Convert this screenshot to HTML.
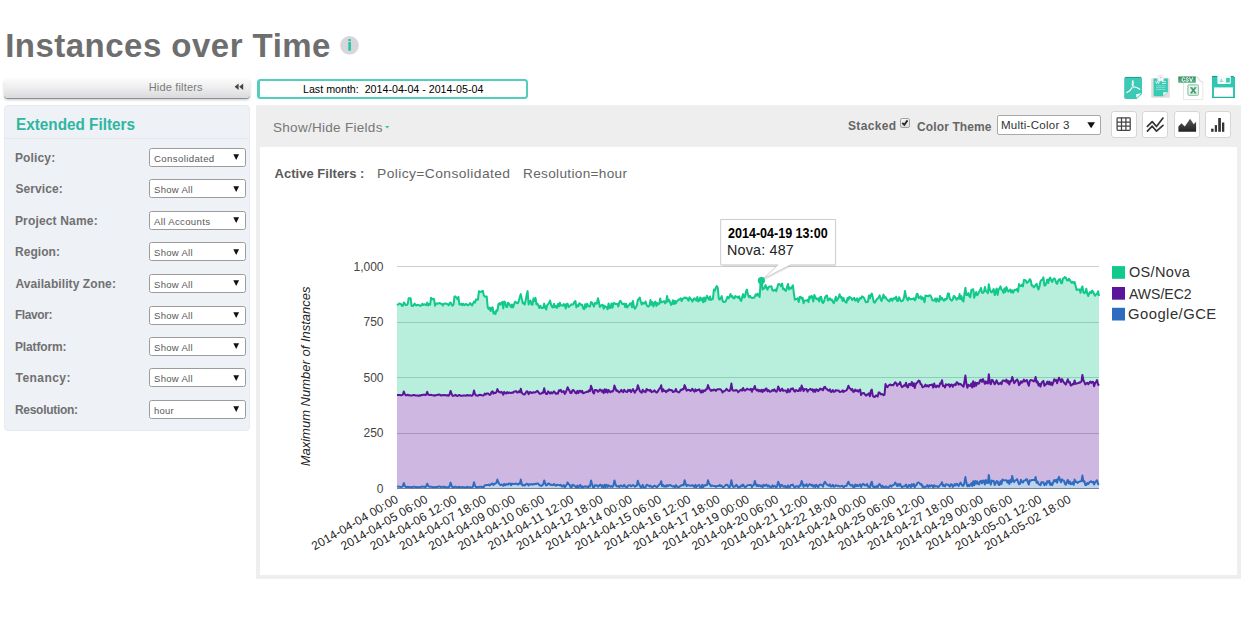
<!DOCTYPE html>
<html><head><meta charset="utf-8"><title>Instances over Time</title>
<style>
html,body{margin:0;padding:0;background:#fff;}
body{width:1254px;height:630px;position:relative;overflow:hidden;font-family:"Liberation Sans",sans-serif;}
.t{position:absolute;white-space:nowrap;font-family:"Liberation Sans",sans-serif;}
.b{position:absolute;}
svg text{font-family:"Liberation Sans",sans-serif;}
</style></head><body>
<div class="t" style="left:5.21px;top:25px;font-size:33px;line-height:41px;color:#6e6e6e;letter-spacing:0.476px;font-weight:bold;">Instances over Time</div>
<svg class="b" style="left:338px;top:34px" width="24" height="24" viewBox="338 34 24 24"><circle cx="349.5" cy="45.3" r="9.3" fill="#d6d7db"/><rect x="348.2" y="39" width="2.8" height="2.3" rx="1" fill="#2cc4a4"/><rect x="348.3" y="42.1" width="2.7" height="8.6" rx="0.6" fill="#2cc4a4"/></svg>
<div class="b" style="left:4px;top:78px;width:246px;height:20px;border-radius:4px;background:linear-gradient(#fcfcfc,#ededee 50%,#d9dadd);box-shadow:0 1px 0.5px #8c9099, 0 2px 2.5px rgba(0,0,0,.22);"></div>
<div class="t" style="left:148.72px;top:80px;font-size:11px;line-height:14px;color:#7a7a7a;letter-spacing:0.174px;">Hide filters</div>
<svg class="b" style="left:234px;top:83px" width="10" height="8" viewBox="0 0 10 8"><path d="M4.6 0.6 L0.6 3.8 L4.6 7 Z M9.2 0.6 L5.2 3.8 L9.2 7 Z" fill="#444"/></svg>
<div class="b" style="left:4px;top:105px;width:246px;height:326px;box-sizing:border-box;border-radius:4px;background:#eef1f6;border:1px solid #e7eaf0;"></div>
<div class="t" style="left:15.78px;top:115px;font-size:16px;line-height:20px;color:#2db7a1;letter-spacing:0.000px;transform:scaleX(0.9556);transform-origin:0 0;font-weight:bold;">Extended Filters</div>
<div class="b" style="left:5px;top:138px;width:244px;height:1px;background:#e4e7ee;"></div>
<div class="t" style="left:14.95px;top:151px;font-size:12px;line-height:15px;color:#707070;letter-spacing:0.150px;font-weight:bold;">Policy:</div>
<div class="b" style="left:149px;top:148px;width:97px;height:19px;box-sizing:border-box;background:#fff;border:1px solid #9c9c9c;border-radius:2.5px;"></div>
<div class="t" style="left:153.63px;top:154px;font-size:9px;line-height:11px;color:#585858;letter-spacing:0.323px;transform:scaleX(1.0741);transform-origin:0 0;">Consolidated</div>
<svg class="b" style="left:233px;top:154.0px" width="7" height="7" viewBox="0 0 7 7"><path d="M0.3 0.3 H6.1 L3.2 5.9 Z" fill="#111"/></svg>
<div class="t" style="left:15.39px;top:182px;font-size:12px;line-height:15px;color:#707070;letter-spacing:0.107px;font-weight:bold;">Service:</div>
<div class="b" style="left:149px;top:179px;width:97px;height:19px;box-sizing:border-box;background:#fff;border:1px solid #9c9c9c;border-radius:2.5px;"></div>
<div class="t" style="left:153.70px;top:185px;font-size:9px;line-height:11px;color:#585858;letter-spacing:0.272px;transform:scaleX(1.0601);transform-origin:0 0;">Show All</div>
<svg class="b" style="left:233px;top:185.5px" width="7" height="7" viewBox="0 0 7 7"><path d="M0.3 0.3 H6.1 L3.2 5.9 Z" fill="#111"/></svg>
<div class="t" style="left:14.95px;top:214px;font-size:12px;line-height:15px;color:#707070;letter-spacing:0.166px;font-weight:bold;">Project Name:</div>
<div class="b" style="left:149px;top:211px;width:97px;height:19px;box-sizing:border-box;background:#fff;border:1px solid #9c9c9c;border-radius:2.5px;"></div>
<div class="t" style="left:154.10px;top:217px;font-size:9px;line-height:11px;color:#585858;letter-spacing:0.297px;transform:scaleX(1.0720);transform-origin:0 0;">All Accounts</div>
<svg class="b" style="left:233px;top:217.0px" width="7" height="7" viewBox="0 0 7 7"><path d="M0.3 0.3 H6.1 L3.2 5.9 Z" fill="#111"/></svg>
<div class="t" style="left:14.95px;top:245px;font-size:12px;line-height:15px;color:#707070;letter-spacing:0.065px;font-weight:bold;">Region:</div>
<div class="b" style="left:149px;top:242px;width:97px;height:19px;box-sizing:border-box;background:#fff;border:1px solid #9c9c9c;border-radius:2.5px;"></div>
<div class="t" style="left:153.70px;top:248px;font-size:9px;line-height:11px;color:#585858;letter-spacing:0.272px;transform:scaleX(1.0601);transform-origin:0 0;">Show All</div>
<svg class="b" style="left:233px;top:248.5px" width="7" height="7" viewBox="0 0 7 7"><path d="M0.3 0.3 H6.1 L3.2 5.9 Z" fill="#111"/></svg>
<div class="t" style="left:15.45px;top:277px;font-size:12px;line-height:15px;color:#707070;letter-spacing:0.090px;font-weight:bold;">Availability Zone:</div>
<div class="b" style="left:149px;top:274px;width:97px;height:19px;box-sizing:border-box;background:#fff;border:1px solid #9c9c9c;border-radius:2.5px;"></div>
<div class="t" style="left:153.70px;top:280px;font-size:9px;line-height:11px;color:#585858;letter-spacing:0.272px;transform:scaleX(1.0601);transform-origin:0 0;">Show All</div>
<svg class="b" style="left:233px;top:280.0px" width="7" height="7" viewBox="0 0 7 7"><path d="M0.3 0.3 H6.1 L3.2 5.9 Z" fill="#111"/></svg>
<div class="t" style="left:14.95px;top:308px;font-size:12px;line-height:15px;color:#707070;letter-spacing:-0.404px;font-weight:bold;">Flavor:</div>
<div class="b" style="left:149px;top:306px;width:97px;height:19px;box-sizing:border-box;background:#fff;border:1px solid #9c9c9c;border-radius:2.5px;"></div>
<div class="t" style="left:153.70px;top:311px;font-size:9px;line-height:11px;color:#585858;letter-spacing:0.272px;transform:scaleX(1.0601);transform-origin:0 0;">Show All</div>
<svg class="b" style="left:233px;top:311.5px" width="7" height="7" viewBox="0 0 7 7"><path d="M0.3 0.3 H6.1 L3.2 5.9 Z" fill="#111"/></svg>
<div class="t" style="left:14.95px;top:340px;font-size:12px;line-height:15px;color:#707070;letter-spacing:-0.127px;font-weight:bold;">Platform:</div>
<div class="b" style="left:149px;top:337px;width:97px;height:19px;box-sizing:border-box;background:#fff;border:1px solid #9c9c9c;border-radius:2.5px;"></div>
<div class="t" style="left:153.70px;top:343px;font-size:9px;line-height:11px;color:#585858;letter-spacing:0.272px;transform:scaleX(1.0601);transform-origin:0 0;">Show All</div>
<svg class="b" style="left:233px;top:343.0px" width="7" height="7" viewBox="0 0 7 7"><path d="M0.3 0.3 H6.1 L3.2 5.9 Z" fill="#111"/></svg>
<div class="t" style="left:15.57px;top:371px;font-size:12px;line-height:15px;color:#707070;letter-spacing:0.434px;font-weight:bold;">Tenancy:</div>
<div class="b" style="left:149px;top:368px;width:97px;height:19px;box-sizing:border-box;background:#fff;border:1px solid #9c9c9c;border-radius:2.5px;"></div>
<div class="t" style="left:153.70px;top:374px;font-size:9px;line-height:11px;color:#585858;letter-spacing:0.272px;transform:scaleX(1.0601);transform-origin:0 0;">Show All</div>
<svg class="b" style="left:233px;top:374.5px" width="7" height="7" viewBox="0 0 7 7"><path d="M0.3 0.3 H6.1 L3.2 5.9 Z" fill="#111"/></svg>
<div class="t" style="left:14.95px;top:403px;font-size:12px;line-height:15px;color:#707070;letter-spacing:-0.283px;font-weight:bold;">Resolution:</div>
<div class="b" style="left:149px;top:400px;width:97px;height:19px;box-sizing:border-box;background:#fff;border:1px solid #9c9c9c;border-radius:2.5px;"></div>
<div class="t" style="left:153.51px;top:406px;font-size:9px;line-height:11px;color:#585858;letter-spacing:0.253px;transform:scaleX(1.0458);transform-origin:0 0;">hour</div>
<svg class="b" style="left:233px;top:406.0px" width="7" height="7" viewBox="0 0 7 7"><path d="M0.3 0.3 H6.1 L3.2 5.9 Z" fill="#111"/></svg>
<div class="b" style="left:257px;top:79px;width:271px;height:20px;box-sizing:border-box;border:2px solid #52cebb;border-left-width:3px;border-radius:3.5px;background:#fff;"></div>
<div class="t" style="left:302.55px;top:82px;font-size:11px;line-height:14px;color:#000;letter-spacing:0.000px;transform:scaleX(0.9700);transform-origin:0 0;">Last month:&nbsp; 2014-04-04 - 2014-05-04</div>
<svg class="b" style="left:1120px;top:72px" width="120" height="30" viewBox="1120 72 120 30">
<defs>
<linearGradient id="gC" x1="0" y1="0" x2="0" y2="1"><stop offset="0" stop-color="#338f62"/><stop offset="1" stop-color="#63b48d"/></linearGradient>
</defs>
<!-- pdf -->
<path d="M1126 77 H1140.4 Q1142 77 1142 78.6 V93.9 L1136.7 98.9 H1126 Q1124.2 98.9 1124.2 97.2 V78.6 Q1124.2 77 1126 77 Z" fill="#3ccab6"/>
<path d="M1125.2 77.4 H1141 " stroke="#1f9484" stroke-width="0.9" fill="none"/>
<path d="M1136 94.3 L1141.3 93.2 L1136.7 97.9 Z" fill="#f2fbf9"/>
<g fill="none" stroke="#ffffff" stroke-width="1.25" stroke-linecap="round">
<path d="M1132.8 80.9 Q1133.6 84.2 1132.5 87 Q1130.6 90.8 1126.9 92.5"/>
<path d="M1132.5 87 Q1136.5 86.6 1139.7 89.3"/>
<path d="M1132.5 87 Q1131.2 84 1132.8 80.9" stroke-width="0.7"/>
</g>
<circle cx="1132.5" cy="87" r="0.7" fill="#6ad4c4"/>
<!-- clipboard -->
<rect x="1151.2" y="78.3" width="18.6" height="19.4" rx="1.2" fill="#e3dddd"/>
<path d="M1153.6 78.5 H1167.9 V92.2 L1163.2 96.3 H1153.6 Z" fill="#36cbb5"/>
<path d="M1163.1 92.3 L1167.7 92 L1163.3 96.1 Z" fill="#f3eeee"/>
<path d="M1157.5 81 V78.3 Q1157.5 75.1 1160.6 75.1 Q1163.7 75.1 1163.7 78.3 V81 Z" fill="#f7f5f5" stroke="#dcd6d6" stroke-width="0.5"/>
<circle cx="1160.6" cy="77.6" r="0.8" fill="#c9c4c4"/>
<path d="M1155.6 80.9 L1156.6 83.6 L1157.6 81.4 L1158.6 83.6 L1159.6 80.9" fill="none" stroke="#fff" stroke-width="0.8" opacity="0.9"/>
<path d="M1162 81.6 H1166 M1162 83.5 H1166" stroke="#fff" stroke-width="0.8" opacity="0.85"/>
<path d="M1156 85.8 H1165.6 M1156 87.7 H1165.6 M1156 89.6 H1165.6" stroke="#fff" stroke-width="0.7" opacity="0.55"/>
<!-- csv -->
<path d="M1183.5 76.8 H1197 L1202.8 82.4 V99.6 H1183.5 Z" fill="#fff" stroke="#dcdcdc" stroke-width="0.7"/>
<path d="M1197 76.8 Q1198 81.5 1202.8 82.4" fill="none" stroke="#d0d0d0" stroke-width="0.7"/>
<rect x="1178.2" y="76.5" width="17.6" height="6.3" fill="url(#gC)"/>
<g fill="none" stroke="#fff" stroke-width="0.95" stroke-linecap="round" stroke-linejoin="round">
<path d="M1184.7 78.3 Q1183.9 77.5 1183.2 77.6 Q1182.1 77.8 1182.1 79.5 Q1182.1 81.3 1183.2 81.4 Q1184 81.5 1184.7 80.7"/>
<path d="M1188.3 78.3 Q1187.6 77.5 1186.8 77.7 Q1186 78 1186.2 78.8 Q1186.5 79.4 1187.3 79.6 Q1188.4 79.9 1188.3 80.7 Q1188.1 81.5 1187.1 81.4 Q1186.3 81.3 1185.9 80.7"/>
<path d="M1189.6 77.7 L1191.1 81.4 L1192.6 77.7"/>
</g>
<rect x="1187.9" y="84.9" width="10.4" height="10.4" rx="0.8" fill="#e9f5ee" stroke="#7cbd9a" stroke-width="1"/>
<path d="M1189.8 87.2 H1196.8 L1194.4 90.3 L1196.8 93.4 H1189.8 L1192.2 90.3 Z" fill="#3d9a69"/><path d="M1192 87.2 L1193.3 89 L1194.6 87.2 Z M1192 93.4 L1193.3 91.6 L1194.6 93.4 Z" fill="#e9f5ee"/>
<!-- floppy -->
<path d="M1212 76 H1233 L1235 78 V97.9 H1212 Z" fill="#2fc7b0"/>
<path d="M1212 76.4 H1217.4 M1230.8 76.4 H1233.2 L1234.8 78" stroke="#1c8f80" stroke-width="0.9" fill="none"/>
<rect x="1214" y="87.4" width="19" height="9.3" fill="#fff"/>
<path d="M1217.4 76 H1230.8 V82.8 Q1230.8 84 1229.6 84 H1218.6 Q1217.4 84 1217.4 82.8 Z" fill="#f4fbfa"/>
<rect x="1226.1" y="78" width="3.7" height="4.5" fill="#38c9b3"/>
<path d="M1221.4 78.7 V81.2 M1219.7 81.4 H1223.1" stroke="#59c9b8" stroke-width="0.7" fill="none"/>
<path d="M1212.4 97.5 H1234.6" stroke="#26a895" stroke-width="0.8"/>
</svg>

<div class="b" style="left:256px;top:105px;width:985px;height:474px;background:#eeeeee;"></div>
<div class="b" style="left:260px;top:147px;width:977px;height:428px;background:#fff;"></div>
<div class="t" style="left:273.31px;top:120px;font-size:13px;line-height:16px;color:#777;letter-spacing:0.263px;transform:scaleX(1.0410);transform-origin:0 0;">Show/Hide Fields</div>
<svg class="b" style="left:384.8px;top:125.6px" width="5" height="3" viewBox="0 0 5 3"><path d="M0 0 H4.4 L2.2 2.4 Z" fill="#3fc3af"/></svg>
<div class="t" style="left:847.99px;top:119px;font-size:12px;line-height:15px;color:#666;letter-spacing:0.327px;font-weight:bold;">Stacked</div>
<div class="t" style="left:917.06px;top:120px;font-size:12px;line-height:15px;color:#666;letter-spacing:0.114px;font-weight:bold;">Color Theme</div>
<div class="b" style="left:900px;top:118px;width:10px;height:10px;box-sizing:border-box;border:1px solid #a3a3a3;border-radius:2px;background:linear-gradient(#f6f6f6,#dedede);"></div>
<svg class="b" style="left:900px;top:118px" width="10" height="10" viewBox="900 118 10 10"><path d="M902.3 122.8 L904.3 124.8 L907.5 120.4" stroke="#2b2b2b" stroke-width="1.9" fill="none"/></svg>
<div class="b" style="left:997px;top:115px;width:104px;height:19.5px;box-sizing:border-box;background:#fff;border:1px solid #a9a9a9;border-radius:2px;"></div>
<div class="t" style="left:1000.98px;top:118px;font-size:11px;line-height:14px;color:#333;letter-spacing:0.236px;transform:scaleX(1.0486);transform-origin:0 0;">Multi-Color 3</div>
<svg class="b" style="left:1086.5px;top:121.5px" width="9" height="7" viewBox="0 0 9 7"><path d="M0.3 0.3 H8.0 L4.15 6.2 Z" fill="#111"/></svg>
<div class="b" style="left:1111px;top:111px;width:26px;height:26.5px;box-sizing:border-box;background:#fff;border:1px solid #d6d6d6;border-radius:3px;"></div>
<div class="b" style="left:1142px;top:111px;width:26px;height:26.5px;box-sizing:border-box;background:#fff;border:1px solid #d6d6d6;border-radius:3px;"></div>
<div class="b" style="left:1174px;top:111px;width:26px;height:26.5px;box-sizing:border-box;background:#fff;border:1px solid #d6d6d6;border-radius:3px;"></div>
<div class="b" style="left:1205px;top:111px;width:26px;height:26.5px;box-sizing:border-box;background:#fff;border:1px solid #d6d6d6;border-radius:3px;"></div>
<svg class="b" style="left:1108px;top:108px" width="130" height="32" viewBox="1108 108 130 32">
<defs><linearGradient id="gA" x1="0" y1="0" x2="0" y2="1"><stop offset="0" stop-color="#5a5a5a"/><stop offset="1" stop-color="#222"/></linearGradient></defs>
<g fill="none" stroke="#454545" stroke-width="1.25">
<rect x="1117.1" y="117.8" width="13.1" height="12.6" rx="0.8"/>
<path d="M1121.5 117.8 V130.4 M1125.9 117.8 V130.4 M1117.1 122 H1130.2 M1117.1 126.2 H1130.2"/>
</g>
<g fill="none" stroke="#333" stroke-width="1.7" stroke-linecap="round" stroke-linejoin="round">
<path d="M1147.4 126.3 L1152.2 121.6 L1156.5 126.5 L1163 118.1"/>
<path d="M1147.4 131.1 L1152.2 126.2 L1156.5 131.1 L1163 125.4"/>
</g>
<path d="M1178.4 131.8 V126.4 L1181.4 123.3 L1184.8 126.6 L1190.1 118.7 L1193.7 124.3 L1196.1 121.7 V131.8 Z" fill="url(#gA)"/>
<g fill="#353535">
<rect x="1211.1" y="128.7" width="2.5" height="3.1"/>
<rect x="1214.8" y="125.1" width="2.2" height="6.7"/>
<rect x="1218.2" y="118" width="2.7" height="13.8"/>
<rect x="1222" y="122.5" width="2.3" height="9.3"/>
</g>
</svg>

<div class="t" style="left:274.59px;top:166px;font-size:13px;line-height:16px;color:#5a5a5a;letter-spacing:0.016px;font-weight:bold;">Active Filters :</div>
<div class="t" style="left:376.77px;top:166px;font-size:13px;line-height:16px;color:#666;letter-spacing:0.386px;transform:scaleX(1.0636);transform-origin:0 0;">Policy=Consolidated</div>
<div class="t" style="left:523.19px;top:166px;font-size:13px;line-height:16px;color:#666;letter-spacing:0.305px;transform:scaleX(1.0477);transform-origin:0 0;">Resolution=hour</div>
<svg class="b" style="left:0;top:0" width="1254" height="630" viewBox="0 0 1254 630">
<rect x="397" y="488" width="702" height="1" fill="#8a8a8a"/>
<rect x="397" y="433" width="702" height="1" fill="#cccccc"/>
<rect x="397" y="377" width="702" height="1" fill="#cccccc"/>
<rect x="397" y="322" width="702" height="1" fill="#cccccc"/>
<rect x="397" y="266" width="702" height="1" fill="#cccccc"/>
<path d="M397.0 305.2 L398.0 304.5 L398.9 303.6 L399.9 303.7 L400.9 304.0 L401.9 305.9 L402.9 305.8 L403.8 302.4 L404.8 303.7 L405.8 305.1 L406.8 305.1 L407.7 303.9 L408.7 298.2 L409.7 298.2 L410.6 298.2 L411.6 305.7 L412.6 306.1 L413.6 305.3 L414.6 303.6 L415.5 305.0 L416.5 305.4 L417.5 304.8 L418.4 305.1 L419.4 305.3 L420.4 305.9 L421.4 305.2 L422.4 303.8 L423.3 305.0 L424.3 304.3 L425.3 304.6 L426.2 305.2 L427.2 302.6 L428.2 305.5 L429.2 304.0 L430.1 304.8 L431.1 297.8 L432.1 299.3 L433.1 298.8 L434.1 299.2 L435.0 305.7 L436.0 303.7 L437.0 303.4 L437.9 303.8 L438.9 303.2 L439.9 303.0 L440.9 303.8 L441.9 304.0 L442.8 305.6 L443.8 303.7 L444.8 303.7 L445.8 303.4 L446.7 303.8 L447.7 304.4 L448.7 305.4 L449.6 303.3 L450.6 302.5 L451.6 304.6 L452.6 305.8 L453.6 304.3 L454.5 296.4 L455.5 296.6 L456.5 297.6 L457.4 299.1 L458.4 297.0 L459.4 304.4 L460.4 304.6 L461.4 303.6 L462.3 305.2 L463.3 303.9 L464.3 305.1 L465.2 304.4 L466.2 303.9 L467.2 305.0 L468.2 305.3 L469.1 304.4 L470.1 303.1 L471.1 304.6 L472.1 305.5 L473.1 303.4 L474.0 301.6 L475.0 302.7 L476.0 299.4 L476.9 299.5 L477.9 299.8 L478.9 291.2 L479.9 291.8 L480.9 291.9 L481.8 291.5 L482.8 290.7 L483.8 295.3 L484.8 296.5 L485.7 296.7 L486.7 296.4 L487.7 307.1 L488.6 309.0 L489.6 307.5 L490.6 311.1 L491.6 307.9 L492.6 307.2 L493.5 313.6 L494.5 312.1 L495.5 314.1 L496.4 310.2 L497.4 310.8 L498.4 304.1 L499.4 303.1 L500.4 304.7 L501.3 303.0 L502.3 301.9 L503.3 308.4 L504.2 301.5 L505.2 302.2 L506.2 306.8 L507.2 307.1 L508.1 302.7 L509.1 303.7 L510.1 305.4 L511.1 307.3 L512.0 304.5 L513.0 307.4 L514.0 304.6 L515.0 301.8 L516.0 302.2 L516.9 303.1 L517.9 303.3 L518.9 300.5 L519.9 296.7 L520.8 294.1 L521.8 299.0 L522.8 303.4 L523.8 302.8 L524.7 304.6 L525.7 300.1 L526.7 294.7 L527.6 291.1 L528.6 304.5 L529.6 301.3 L530.6 300.6 L531.5 304.6 L532.5 304.8 L533.5 298.3 L534.5 301.0 L535.5 297.9 L536.4 304.3 L537.4 303.5 L538.4 305.6 L539.4 308.0 L540.3 305.7 L541.3 307.8 L542.3 308.1 L543.2 307.8 L544.2 303.6 L545.2 307.8 L546.2 309.5 L547.1 305.3 L548.1 304.1 L549.1 302.8 L550.1 300.6 L551.0 304.5 L552.0 306.8 L553.0 307.4 L554.0 303.8 L555.0 307.2 L555.9 306.0 L556.9 307.9 L557.9 303.9 L558.9 306.5 L559.8 302.7 L560.8 305.5 L561.8 305.4 L562.8 305.8 L563.7 304.1 L564.7 304.7 L565.7 308.6 L566.6 303.9 L567.6 303.7 L568.6 307.1 L569.6 305.9 L570.5 305.5 L571.5 304.2 L572.5 304.6 L573.5 304.2 L574.5 301.5 L575.4 301.0 L576.4 307.3 L577.4 305.2 L578.4 306.1 L579.3 303.2 L580.3 304.1 L581.3 305.0 L582.2 304.7 L583.2 308.5 L584.2 309.2 L585.2 304.3 L586.1 307.4 L587.1 303.7 L588.1 305.7 L589.1 306.5 L590.0 306.6 L591.0 302.0 L592.0 302.6 L593.0 304.7 L594.0 306.6 L594.9 302.8 L595.9 303.3 L596.9 303.7 L597.9 298.3 L598.8 301.4 L599.8 307.0 L600.8 305.9 L601.8 304.9 L602.7 304.7 L603.7 308.7 L604.7 305.8 L605.6 306.8 L606.6 307.0 L607.6 309.3 L608.6 303.5 L609.5 307.9 L610.5 307.9 L611.5 303.5 L612.5 307.8 L613.5 303.3 L614.4 303.1 L615.4 304.0 L616.4 304.0 L617.4 304.0 L618.3 306.5 L619.3 302.4 L620.3 300.8 L621.2 302.1 L622.2 303.9 L623.2 304.0 L624.2 303.6 L625.1 307.0 L626.1 303.8 L627.1 307.6 L628.1 306.2 L629.0 305.1 L630.0 303.6 L631.0 303.1 L632.0 307.2 L633.0 300.9 L633.9 306.9 L634.9 308.7 L635.9 307.3 L636.9 305.1 L637.8 300.0 L638.8 299.1 L639.8 297.6 L640.8 301.7 L641.7 304.5 L642.7 302.5 L643.7 303.4 L644.6 303.4 L645.6 301.5 L646.6 305.0 L647.6 306.3 L648.5 306.5 L649.5 305.3 L650.5 299.9 L651.5 304.8 L652.5 302.2 L653.4 306.6 L654.4 302.9 L655.4 301.6 L656.4 306.0 L657.3 303.0 L658.3 304.5 L659.3 303.8 L660.2 298.4 L661.2 302.4 L662.2 302.0 L663.2 301.6 L664.1 301.0 L665.1 303.4 L666.1 302.2 L667.1 296.0 L668.0 301.5 L669.0 299.8 L670.0 302.0 L671.0 304.9 L672.0 304.0 L672.9 300.2 L673.9 304.1 L674.9 300.9 L675.9 303.4 L676.8 301.3 L677.8 300.4 L678.8 299.5 L679.8 299.4 L680.7 298.3 L681.7 301.2 L682.7 298.7 L683.6 298.5 L684.6 297.5 L685.6 298.0 L686.6 297.7 L687.5 299.1 L688.5 300.6 L689.5 297.2 L690.5 299.0 L691.5 299.4 L692.4 301.6 L693.4 299.5 L694.4 298.2 L695.4 299.6 L696.3 300.7 L697.3 296.9 L698.3 301.5 L699.2 300.8 L700.2 297.4 L701.2 300.1 L702.2 298.3 L703.1 302.2 L704.1 297.5 L705.1 301.4 L706.1 298.0 L707.0 295.8 L708.0 298.3 L709.0 299.8 L710.0 296.4 L711.0 300.0 L711.9 299.4 L712.9 298.9 L713.9 289.5 L714.9 290.7 L715.8 287.7 L716.8 286.1 L717.8 287.9 L718.8 298.5 L719.7 299.6 L720.7 298.1 L721.7 296.1 L722.6 300.8 L723.6 302.1 L724.6 301.9 L725.6 301.3 L726.5 299.4 L727.5 296.7 L728.5 298.3 L729.5 297.0 L730.5 294.0 L731.4 296.6 L732.4 296.1 L733.4 298.3 L734.4 298.3 L735.3 296.0 L736.3 296.8 L737.3 296.8 L738.2 297.9 L739.2 296.3 L740.2 299.8 L741.2 300.9 L742.1 297.4 L743.1 294.1 L744.1 297.6 L745.1 296.3 L746.0 291.3 L747.0 289.6 L748.0 294.9 L749.0 297.1 L750.0 295.8 L750.9 297.4 L751.9 297.9 L752.9 297.7 L753.9 297.8 L754.8 296.6 L755.8 294.2 L756.8 295.6 L757.8 293.6 L758.7 295.3 L759.7 297.0 L760.7 279.9 L761.6 277.8 L762.6 289.5 L763.6 288.9 L764.6 287.7 L765.5 285.0 L766.5 287.9 L767.5 289.7 L768.5 287.2 L769.5 286.6 L770.4 286.5 L771.4 286.2 L772.4 290.2 L773.4 290.8 L774.3 290.2 L775.3 289.6 L776.3 291.1 L777.2 287.9 L778.2 284.2 L779.2 284.0 L780.2 284.8 L781.1 286.2 L782.1 283.6 L783.1 289.2 L784.1 288.7 L785.0 290.2 L786.0 291.0 L787.0 287.0 L788.0 284.0 L789.0 289.4 L789.9 287.6 L790.9 288.7 L791.9 287.0 L792.9 285.4 L793.8 292.9 L794.8 299.7 L795.8 298.9 L796.8 299.0 L797.7 298.4 L798.7 302.1 L799.7 297.0 L800.6 296.7 L801.6 298.6 L802.6 297.7 L803.6 303.2 L804.5 300.8 L805.5 300.4 L806.5 300.5 L807.5 299.8 L808.5 302.1 L809.4 296.5 L810.4 298.3 L811.4 295.9 L812.4 296.7 L813.3 301.6 L814.3 295.0 L815.3 297.0 L816.2 298.8 L817.2 299.5 L818.2 298.2 L819.2 301.5 L820.1 297.1 L821.1 296.8 L822.1 301.8 L823.1 303.0 L824.0 301.5 L825.0 297.4 L826.0 296.0 L827.0 295.5 L828.0 300.5 L828.9 299.7 L829.9 298.3 L830.9 300.0 L831.9 299.6 L832.8 301.8 L833.8 303.1 L834.8 300.3 L835.8 296.7 L836.7 300.8 L837.7 299.3 L838.7 297.1 L839.6 294.2 L840.6 297.5 L841.6 297.0 L842.6 300.9 L843.5 298.0 L844.5 300.9 L845.5 302.0 L846.5 302.7 L847.5 298.0 L848.4 299.8 L849.4 296.8 L850.4 297.8 L851.4 298.1 L852.3 300.0 L853.3 298.6 L854.3 297.9 L855.2 300.6 L856.2 300.2 L857.2 298.3 L858.2 302.0 L859.1 299.7 L860.1 297.9 L861.1 298.7 L862.1 296.3 L863.0 296.8 L864.0 297.9 L865.0 300.2 L866.0 302.3 L867.0 302.1 L867.9 301.8 L868.9 295.4 L869.9 298.2 L870.9 294.9 L871.8 293.6 L872.8 297.4 L873.8 302.1 L874.8 302.7 L875.7 301.1 L876.7 299.4 L877.7 298.6 L878.6 297.6 L879.6 295.4 L880.6 298.8 L881.6 301.0 L882.5 298.2 L883.5 294.6 L884.5 297.9 L885.5 297.1 L886.5 298.9 L887.4 299.9 L888.4 300.6 L889.4 301.4 L890.4 299.0 L891.3 298.6 L892.3 300.8 L893.3 298.6 L894.2 298.0 L895.2 299.1 L896.2 296.6 L897.2 301.0 L898.1 301.0 L899.1 297.2 L900.1 299.6 L901.1 301.3 L902.0 301.0 L903.0 300.4 L904.0 297.6 L905.0 291.1 L906.0 296.4 L906.9 299.0 L907.9 300.4 L908.9 297.6 L909.9 299.0 L910.8 299.4 L911.8 298.9 L912.8 299.1 L913.8 298.1 L914.7 300.3 L915.7 299.0 L916.7 294.1 L917.6 294.0 L918.6 298.0 L919.6 297.8 L920.6 296.2 L921.5 299.2 L922.5 297.3 L923.5 298.9 L924.5 302.3 L925.5 295.4 L926.4 296.1 L927.4 296.1 L928.4 296.2 L929.4 295.4 L930.3 295.2 L931.3 297.1 L932.3 300.1 L933.2 300.6 L934.2 300.6 L935.2 298.5 L936.2 301.8 L937.1 298.4 L938.1 300.3 L939.1 301.5 L940.1 295.9 L941.0 299.4 L942.0 297.8 L943.0 299.7 L944.0 300.8 L945.0 298.9 L945.9 299.7 L946.9 298.5 L947.9 293.5 L948.9 293.6 L949.8 298.8 L950.8 299.8 L951.8 300.7 L952.8 299.4 L953.7 296.0 L954.7 296.5 L955.7 298.2 L956.6 299.8 L957.6 298.1 L958.6 298.6 L959.6 294.1 L960.5 299.1 L961.5 296.1 L962.5 300.5 L963.5 301.5 L964.5 293.0 L965.4 287.8 L966.4 295.0 L967.4 294.9 L968.4 293.1 L969.3 296.3 L970.3 297.3 L971.3 290.1 L972.2 289.6 L973.2 289.2 L974.2 297.8 L975.2 294.6 L976.1 292.0 L977.1 295.3 L978.1 294.1 L979.1 291.7 L980.0 290.4 L981.0 287.9 L982.0 292.8 L983.0 293.0 L984.0 291.6 L984.9 286.9 L985.9 291.0 L986.9 291.7 L987.9 293.2 L988.8 284.2 L989.8 289.2 L990.8 292.0 L991.8 292.4 L992.7 290.6 L993.7 289.1 L994.7 295.1 L995.6 292.0 L996.6 288.4 L997.6 294.9 L998.6 289.4 L999.5 288.6 L1000.5 286.3 L1001.5 289.8 L1002.5 290.3 L1003.5 293.0 L1004.4 288.4 L1005.4 291.9 L1006.4 287.0 L1007.4 289.7 L1008.3 291.6 L1009.3 290.7 L1010.3 289.5 L1011.2 292.5 L1012.2 290.4 L1013.2 292.7 L1014.2 290.3 L1015.1 289.7 L1016.1 290.2 L1017.1 288.9 L1018.1 291.6 L1019.0 284.1 L1020.0 286.0 L1021.0 286.1 L1022.0 284.5 L1023.0 286.4 L1023.9 280.0 L1024.9 280.1 L1025.9 280.7 L1026.8 282.9 L1027.8 282.1 L1028.8 281.2 L1029.8 279.1 L1030.8 280.6 L1031.7 285.6 L1032.7 285.4 L1033.7 287.3 L1034.7 286.4 L1035.6 284.9 L1036.6 283.8 L1037.6 287.6 L1038.5 289.5 L1039.5 286.6 L1040.5 281.3 L1041.5 279.9 L1042.5 279.7 L1043.4 277.4 L1044.4 285.5 L1045.4 285.2 L1046.3 283.3 L1047.3 279.4 L1048.3 283.0 L1049.3 278.8 L1050.2 277.6 L1051.2 280.3 L1052.2 281.9 L1053.2 279.5 L1054.2 278.4 L1055.1 279.3 L1056.1 282.7 L1057.1 284.0 L1058.0 281.1 L1059.0 279.5 L1060.0 279.1 L1061.0 282.9 L1062.0 283.3 L1062.9 278.6 L1063.9 278.2 L1064.9 277.0 L1065.8 277.5 L1066.8 280.2 L1067.8 280.7 L1068.8 278.7 L1069.8 279.8 L1070.7 281.5 L1071.7 282.8 L1072.7 281.8 L1073.7 283.2 L1074.6 282.0 L1075.6 286.1 L1076.6 290.0 L1077.5 289.6 L1078.5 289.4 L1079.5 289.5 L1080.5 292.8 L1081.5 288.2 L1082.4 286.5 L1083.4 292.3 L1084.4 293.3 L1085.3 292.1 L1086.3 288.8 L1087.3 293.8 L1088.3 296.0 L1089.2 293.3 L1090.2 291.8 L1091.2 293.1 L1092.2 290.6 L1093.2 291.9 L1094.1 294.1 L1095.1 295.7 L1096.1 294.2 L1097.0 294.2 L1098.0 291.2 L1099.0 296.1 L1099.0 385.7 L1098.0 384.3 L1097.0 380.1 L1096.1 382.0 L1095.1 383.2 L1094.1 386.2 L1093.2 381.9 L1092.2 381.8 L1091.2 382.9 L1090.2 381.5 L1089.2 382.9 L1088.3 384.3 L1087.3 382.7 L1086.3 383.6 L1085.3 384.5 L1084.4 382.1 L1083.4 380.2 L1082.4 374.9 L1081.5 381.4 L1080.5 382.4 L1079.5 382.3 L1078.5 383.1 L1077.5 383.2 L1076.6 383.4 L1075.6 383.9 L1074.6 380.4 L1073.7 384.3 L1072.7 383.8 L1071.7 385.3 L1070.7 385.6 L1069.8 382.0 L1068.8 382.5 L1067.8 379.3 L1066.8 381.9 L1065.8 384.6 L1064.9 383.5 L1063.9 382.6 L1062.9 380.7 L1062.0 379.1 L1061.0 382.0 L1060.0 379.7 L1059.0 377.8 L1058.0 380.3 L1057.1 383.2 L1056.1 379.9 L1055.1 380.8 L1054.2 379.2 L1053.2 382.7 L1052.2 385.1 L1051.2 382.5 L1050.2 384.7 L1049.3 381.6 L1048.3 384.1 L1047.3 381.6 L1046.3 383.9 L1045.4 384.7 L1044.4 385.7 L1043.4 380.9 L1042.5 381.7 L1041.5 383.1 L1040.5 386.6 L1039.5 383.9 L1038.5 385.5 L1037.6 381.4 L1036.6 382.5 L1035.6 376.9 L1034.7 380.6 L1033.7 381.4 L1032.7 380.5 L1031.7 380.2 L1030.8 380.0 L1029.8 380.8 L1028.8 385.7 L1027.8 383.2 L1026.8 380.0 L1025.9 380.8 L1024.9 381.5 L1023.9 379.6 L1023.0 381.5 L1022.0 382.7 L1021.0 381.2 L1020.0 383.9 L1019.0 385.2 L1018.1 381.3 L1017.1 379.5 L1016.1 380.4 L1015.1 381.9 L1014.2 383.2 L1013.2 380.0 L1012.2 376.9 L1011.2 381.4 L1010.3 381.0 L1009.3 384.6 L1008.3 381.1 L1007.4 382.7 L1006.4 379.6 L1005.4 381.4 L1004.4 380.9 L1003.5 380.5 L1002.5 380.7 L1001.5 384.2 L1000.5 382.6 L999.5 383.6 L998.6 384.2 L997.6 382.8 L996.6 380.4 L995.6 382.7 L994.7 384.3 L993.7 382.2 L992.7 380.2 L991.8 379.9 L990.8 384.2 L989.8 382.4 L988.8 374.3 L987.9 383.4 L986.9 383.3 L985.9 381.4 L984.9 383.9 L984.0 381.6 L983.0 379.1 L982.0 381.9 L981.0 379.7 L980.0 380.3 L979.1 383.4 L978.1 383.8 L977.1 382.7 L976.1 385.8 L975.2 382.4 L974.2 386.6 L973.2 381.2 L972.2 387.6 L971.3 383.5 L970.3 386.0 L969.3 385.6 L968.4 384.9 L967.4 387.7 L966.4 383.8 L965.4 375.6 L964.5 381.2 L963.5 386.8 L962.5 385.8 L961.5 385.0 L960.5 383.9 L959.6 383.8 L958.6 384.6 L957.6 382.7 L956.6 382.2 L955.7 385.1 L954.7 384.3 L953.7 384.8 L952.8 386.8 L951.8 384.6 L950.8 384.8 L949.8 386.8 L948.9 384.3 L947.9 384.7 L946.9 384.9 L945.9 384.3 L945.0 387.4 L944.0 385.7 L943.0 386.1 L942.0 380.2 L941.0 383.6 L940.1 383.3 L939.1 386.8 L938.1 386.3 L937.1 385.5 L936.2 387.3 L935.2 386.6 L934.2 383.5 L933.2 387.6 L932.3 384.5 L931.3 384.9 L930.3 384.9 L929.4 385.1 L928.4 386.7 L927.4 385.4 L926.4 386.3 L925.5 384.6 L924.5 386.4 L923.5 386.7 L922.5 387.3 L921.5 384.3 L920.6 384.3 L919.6 381.0 L918.6 380.6 L917.6 382.3 L916.7 382.8 L915.7 384.2 L914.7 388.1 L913.8 383.3 L912.8 386.1 L911.8 382.0 L910.8 385.3 L909.9 384.1 L908.9 384.1 L907.9 387.5 L906.9 386.8 L906.0 382.8 L905.0 385.7 L904.0 385.3 L903.0 386.5 L902.0 387.1 L901.1 385.5 L900.1 382.1 L899.1 384.1 L898.1 384.2 L897.2 385.8 L896.2 383.2 L895.2 382.3 L894.2 383.6 L893.3 385.3 L892.3 384.9 L891.3 385.2 L890.4 384.4 L889.4 385.0 L888.4 385.6 L887.4 387.1 L886.5 386.7 L885.5 384.0 L884.5 394.6 L883.5 395.3 L882.5 394.3 L881.6 394.1 L880.6 394.2 L879.6 392.4 L878.6 392.6 L877.7 396.5 L876.7 395.5 L875.7 395.4 L874.8 397.0 L873.8 396.9 L872.8 395.9 L871.8 389.6 L870.9 390.9 L869.9 396.3 L868.9 393.2 L867.9 394.7 L867.0 394.5 L866.0 395.7 L865.0 394.6 L864.0 392.9 L863.0 393.3 L862.1 393.3 L861.1 395.1 L860.1 389.5 L859.1 390.2 L858.2 391.7 L857.2 390.3 L856.2 390.9 L855.2 389.6 L854.3 391.5 L853.3 391.9 L852.3 389.0 L851.4 390.1 L850.4 388.8 L849.4 387.9 L848.4 385.7 L847.5 388.5 L846.5 390.4 L845.5 390.8 L844.5 390.9 L843.5 392.0 L842.6 390.3 L841.6 391.5 L840.6 391.8 L839.6 391.9 L838.7 390.4 L837.7 390.6 L836.7 390.6 L835.8 390.1 L834.8 391.6 L833.8 391.9 L832.8 390.0 L831.9 391.5 L830.9 392.0 L829.9 389.3 L828.9 390.7 L828.0 390.4 L827.0 389.1 L826.0 388.6 L825.0 386.7 L824.0 387.4 L823.1 390.3 L822.1 389.1 L821.1 389.5 L820.1 388.5 L819.2 390.0 L818.2 391.2 L817.2 389.9 L816.2 389.2 L815.3 391.9 L814.3 389.7 L813.3 391.7 L812.4 389.2 L811.4 390.0 L810.4 388.9 L809.4 389.5 L808.5 390.0 L807.5 391.6 L806.5 389.0 L805.5 389.4 L804.5 389.1 L803.6 391.1 L802.6 388.1 L801.6 385.6 L800.6 390.7 L799.7 388.4 L798.7 390.9 L797.7 391.1 L796.8 390.5 L795.8 390.0 L794.8 391.7 L793.8 390.5 L792.9 388.3 L791.9 388.9 L790.9 388.7 L789.9 391.8 L789.0 391.8 L788.0 389.1 L787.0 392.4 L786.0 390.9 L785.0 390.4 L784.1 390.4 L783.1 390.9 L782.1 388.6 L781.1 389.9 L780.2 391.0 L779.2 388.8 L778.2 386.5 L777.2 390.7 L776.3 391.8 L775.3 390.9 L774.3 389.4 L773.4 390.8 L772.4 390.0 L771.4 391.0 L770.4 391.8 L769.5 391.3 L768.5 390.0 L767.5 391.3 L766.5 388.5 L765.5 389.0 L764.6 390.8 L763.6 389.8 L762.6 392.0 L761.6 389.7 L760.7 391.4 L759.7 390.0 L758.7 391.4 L757.8 389.6 L756.8 390.5 L755.8 389.4 L754.8 385.9 L753.9 388.9 L752.9 389.0 L751.9 391.8 L750.9 388.8 L750.0 389.8 L749.0 389.4 L748.0 389.2 L747.0 388.8 L746.0 389.7 L745.1 390.7 L744.1 390.1 L743.1 388.0 L742.1 390.7 L741.2 389.6 L740.2 390.3 L739.2 391.2 L738.2 392.1 L737.3 390.7 L736.3 390.0 L735.3 390.5 L734.4 390.4 L733.4 390.7 L732.4 390.2 L731.4 383.6 L730.5 388.9 L729.5 391.0 L728.5 390.8 L727.5 389.9 L726.5 388.9 L725.6 390.1 L724.6 391.2 L723.6 391.2 L722.6 392.5 L721.7 390.6 L720.7 389.5 L719.7 389.3 L718.8 389.3 L717.8 389.3 L716.8 389.7 L715.8 391.0 L714.9 389.7 L713.9 389.5 L712.9 390.5 L711.9 389.9 L711.0 390.9 L710.0 389.6 L709.0 388.2 L708.0 385.1 L707.0 389.1 L706.1 389.3 L705.1 391.0 L704.1 390.3 L703.1 392.1 L702.2 390.3 L701.2 392.6 L700.2 391.3 L699.2 389.3 L698.3 389.9 L697.3 390.1 L696.3 391.0 L695.4 389.4 L694.4 391.7 L693.4 390.6 L692.4 388.7 L691.5 389.8 L690.5 391.0 L689.5 390.1 L688.5 389.7 L687.5 390.0 L686.6 390.7 L685.6 387.5 L684.6 385.1 L683.6 389.2 L682.7 388.9 L681.7 390.0 L680.7 389.8 L679.8 391.6 L678.8 392.5 L677.8 391.9 L676.8 391.4 L675.9 389.0 L674.9 391.4 L673.9 391.5 L672.9 392.0 L672.0 390.2 L671.0 390.1 L670.0 390.2 L669.0 389.4 L668.0 390.9 L667.1 390.6 L666.1 392.2 L665.1 390.8 L664.1 391.1 L663.2 389.2 L662.2 391.6 L661.2 385.3 L660.2 387.9 L659.3 389.0 L658.3 390.3 L657.3 392.2 L656.4 392.4 L655.4 391.5 L654.4 390.3 L653.4 391.6 L652.5 391.6 L651.5 392.2 L650.5 389.8 L649.5 390.7 L648.5 390.0 L647.6 390.3 L646.6 388.9 L645.6 392.2 L644.6 391.3 L643.7 391.6 L642.7 389.8 L641.7 392.6 L640.8 392.0 L639.8 391.0 L638.8 387.8 L637.8 385.2 L636.9 389.7 L635.9 390.3 L634.9 392.7 L633.9 391.1 L633.0 389.1 L632.0 390.5 L631.0 392.2 L630.0 389.8 L629.0 391.0 L628.1 389.8 L627.1 392.1 L626.1 391.7 L625.1 391.0 L624.2 389.7 L623.2 392.3 L622.2 391.3 L621.2 389.9 L620.3 391.4 L619.3 392.4 L618.3 391.6 L617.4 390.5 L616.4 390.9 L615.4 388.1 L614.4 385.6 L613.5 390.1 L612.5 391.6 L611.5 391.3 L610.5 392.2 L609.5 391.4 L608.6 390.0 L607.6 392.6 L606.6 389.6 L605.6 392.1 L604.7 389.3 L603.7 393.1 L602.7 390.3 L601.8 391.7 L600.8 389.9 L599.8 389.5 L598.8 391.2 L597.9 391.8 L596.9 390.4 L595.9 389.9 L594.9 390.1 L594.0 393.5 L593.0 392.3 L592.0 388.6 L591.0 385.8 L590.0 391.1 L589.1 390.4 L588.1 391.9 L587.1 391.5 L586.1 392.2 L585.2 392.3 L584.2 392.8 L583.2 393.3 L582.2 390.9 L581.3 392.3 L580.3 390.7 L579.3 391.0 L578.4 393.0 L577.4 390.9 L576.4 393.4 L575.4 392.9 L574.5 391.3 L573.5 390.1 L572.5 390.2 L571.5 392.9 L570.5 393.1 L569.6 390.9 L568.6 389.4 L567.6 387.3 L566.6 390.1 L565.7 392.4 L564.7 393.9 L563.7 391.1 L562.8 391.7 L561.8 392.2 L560.8 389.8 L559.8 390.9 L558.9 390.2 L557.9 393.6 L556.9 393.3 L555.9 393.9 L555.0 392.7 L554.0 391.4 L553.0 392.6 L552.0 393.4 L551.0 392.2 L550.1 393.6 L549.1 392.4 L548.1 391.4 L547.1 393.9 L546.2 394.1 L545.2 392.4 L544.2 388.2 L543.2 392.8 L542.3 392.4 L541.3 393.6 L540.3 393.8 L539.4 393.8 L538.4 392.1 L537.4 390.8 L536.4 391.6 L535.5 392.2 L534.5 392.5 L533.5 392.2 L532.5 392.8 L531.5 393.0 L530.6 392.1 L529.6 392.2 L528.6 394.2 L527.6 391.5 L526.7 391.3 L525.7 392.8 L524.7 394.5 L523.8 394.4 L522.8 393.7 L521.8 392.8 L520.8 388.7 L519.9 392.3 L518.9 391.2 L517.9 392.4 L516.9 392.6 L516.0 391.1 L515.0 391.4 L514.0 391.8 L513.0 392.8 L512.0 392.5 L511.1 393.1 L510.1 392.8 L509.1 392.4 L508.1 393.3 L507.2 392.0 L506.2 393.5 L505.2 393.1 L504.2 391.9 L503.3 394.6 L502.3 393.0 L501.3 391.7 L500.4 392.5 L499.4 392.1 L498.4 391.3 L497.4 389.1 L496.4 392.2 L495.5 392.9 L494.5 392.7 L493.5 393.6 L492.6 391.3 L491.6 391.8 L490.6 394.3 L489.6 394.9 L488.6 393.8 L487.7 393.5 L486.7 393.6 L485.7 394.4 L484.8 393.6 L483.8 395.2 L482.8 395.5 L481.8 395.2 L480.9 394.9 L479.9 394.7 L478.9 395.1 L477.9 395.7 L476.9 395.6 L476.0 395.5 L475.0 394.0 L474.0 390.4 L473.1 394.4 L472.1 395.7 L471.1 395.7 L470.1 395.2 L469.1 395.7 L468.2 395.3 L467.2 394.9 L466.2 395.8 L465.2 395.6 L464.3 395.5 L463.3 395.6 L462.3 395.8 L461.4 395.7 L460.4 395.7 L459.4 394.9 L458.4 395.2 L457.4 396.0 L456.5 395.6 L455.5 394.8 L454.5 395.3 L453.6 395.8 L452.6 395.8 L451.6 394.0 L450.6 390.9 L449.6 394.3 L448.7 395.8 L447.7 395.1 L446.7 395.6 L445.8 395.3 L444.8 394.9 L443.8 395.3 L442.8 395.2 L441.9 395.0 L440.9 395.6 L439.9 394.7 L438.9 394.5 L437.9 394.8 L437.0 395.1 L436.0 395.2 L435.0 395.7 L434.1 395.2 L433.1 395.4 L432.1 395.1 L431.1 394.8 L430.1 395.0 L429.2 394.9 L428.2 394.6 L427.2 391.9 L426.2 394.7 L425.3 395.2 L424.3 394.7 L423.3 394.7 L422.4 394.9 L421.4 395.1 L420.4 395.7 L419.4 395.3 L418.4 395.9 L417.5 395.4 L416.5 395.5 L415.5 395.6 L414.6 395.0 L413.6 394.9 L412.6 395.4 L411.6 395.4 L410.6 395.6 L409.7 395.3 L408.7 395.3 L407.7 394.7 L406.8 395.3 L405.8 395.3 L404.8 394.0 L403.8 391.5 L402.9 394.5 L401.9 395.2 L400.9 395.3 L399.9 394.9 L398.9 394.9 L398.0 394.9 L397.0 394.9 Z" fill="#10c98b" fill-opacity="0.3"/>
<path d="M397.0 394.9 L398.0 394.9 L398.9 394.9 L399.9 394.9 L400.9 395.3 L401.9 395.2 L402.9 394.5 L403.8 391.5 L404.8 394.0 L405.8 395.3 L406.8 395.3 L407.7 394.7 L408.7 395.3 L409.7 395.3 L410.6 395.6 L411.6 395.4 L412.6 395.4 L413.6 394.9 L414.6 395.0 L415.5 395.6 L416.5 395.5 L417.5 395.4 L418.4 395.9 L419.4 395.3 L420.4 395.7 L421.4 395.1 L422.4 394.9 L423.3 394.7 L424.3 394.7 L425.3 395.2 L426.2 394.7 L427.2 391.9 L428.2 394.6 L429.2 394.9 L430.1 395.0 L431.1 394.8 L432.1 395.1 L433.1 395.4 L434.1 395.2 L435.0 395.7 L436.0 395.2 L437.0 395.1 L437.9 394.8 L438.9 394.5 L439.9 394.7 L440.9 395.6 L441.9 395.0 L442.8 395.2 L443.8 395.3 L444.8 394.9 L445.8 395.3 L446.7 395.6 L447.7 395.1 L448.7 395.8 L449.6 394.3 L450.6 390.9 L451.6 394.0 L452.6 395.8 L453.6 395.8 L454.5 395.3 L455.5 394.8 L456.5 395.6 L457.4 396.0 L458.4 395.2 L459.4 394.9 L460.4 395.7 L461.4 395.7 L462.3 395.8 L463.3 395.6 L464.3 395.5 L465.2 395.6 L466.2 395.8 L467.2 394.9 L468.2 395.3 L469.1 395.7 L470.1 395.2 L471.1 395.7 L472.1 395.7 L473.1 394.4 L474.0 390.4 L475.0 394.0 L476.0 395.5 L476.9 395.6 L477.9 395.7 L478.9 395.1 L479.9 394.7 L480.9 394.9 L481.8 395.2 L482.8 395.5 L483.8 395.2 L484.8 393.6 L485.7 394.4 L486.7 393.6 L487.7 393.5 L488.6 393.8 L489.6 394.9 L490.6 394.3 L491.6 391.8 L492.6 391.3 L493.5 393.6 L494.5 392.7 L495.5 392.9 L496.4 392.2 L497.4 389.1 L498.4 391.3 L499.4 392.1 L500.4 392.5 L501.3 391.7 L502.3 393.0 L503.3 394.6 L504.2 391.9 L505.2 393.1 L506.2 393.5 L507.2 392.0 L508.1 393.3 L509.1 392.4 L510.1 392.8 L511.1 393.1 L512.0 392.5 L513.0 392.8 L514.0 391.8 L515.0 391.4 L516.0 391.1 L516.9 392.6 L517.9 392.4 L518.9 391.2 L519.9 392.3 L520.8 388.7 L521.8 392.8 L522.8 393.7 L523.8 394.4 L524.7 394.5 L525.7 392.8 L526.7 391.3 L527.6 391.5 L528.6 394.2 L529.6 392.2 L530.6 392.1 L531.5 393.0 L532.5 392.8 L533.5 392.2 L534.5 392.5 L535.5 392.2 L536.4 391.6 L537.4 390.8 L538.4 392.1 L539.4 393.8 L540.3 393.8 L541.3 393.6 L542.3 392.4 L543.2 392.8 L544.2 388.2 L545.2 392.4 L546.2 394.1 L547.1 393.9 L548.1 391.4 L549.1 392.4 L550.1 393.6 L551.0 392.2 L552.0 393.4 L553.0 392.6 L554.0 391.4 L555.0 392.7 L555.9 393.9 L556.9 393.3 L557.9 393.6 L558.9 390.2 L559.8 390.9 L560.8 389.8 L561.8 392.2 L562.8 391.7 L563.7 391.1 L564.7 393.9 L565.7 392.4 L566.6 390.1 L567.6 387.3 L568.6 389.4 L569.6 390.9 L570.5 393.1 L571.5 392.9 L572.5 390.2 L573.5 390.1 L574.5 391.3 L575.4 392.9 L576.4 393.4 L577.4 390.9 L578.4 393.0 L579.3 391.0 L580.3 390.7 L581.3 392.3 L582.2 390.9 L583.2 393.3 L584.2 392.8 L585.2 392.3 L586.1 392.2 L587.1 391.5 L588.1 391.9 L589.1 390.4 L590.0 391.1 L591.0 385.8 L592.0 388.6 L593.0 392.3 L594.0 393.5 L594.9 390.1 L595.9 389.9 L596.9 390.4 L597.9 391.8 L598.8 391.2 L599.8 389.5 L600.8 389.9 L601.8 391.7 L602.7 390.3 L603.7 393.1 L604.7 389.3 L605.6 392.1 L606.6 389.6 L607.6 392.6 L608.6 390.0 L609.5 391.4 L610.5 392.2 L611.5 391.3 L612.5 391.6 L613.5 390.1 L614.4 385.6 L615.4 388.1 L616.4 390.9 L617.4 390.5 L618.3 391.6 L619.3 392.4 L620.3 391.4 L621.2 389.9 L622.2 391.3 L623.2 392.3 L624.2 389.7 L625.1 391.0 L626.1 391.7 L627.1 392.1 L628.1 389.8 L629.0 391.0 L630.0 389.8 L631.0 392.2 L632.0 390.5 L633.0 389.1 L633.9 391.1 L634.9 392.7 L635.9 390.3 L636.9 389.7 L637.8 385.2 L638.8 387.8 L639.8 391.0 L640.8 392.0 L641.7 392.6 L642.7 389.8 L643.7 391.6 L644.6 391.3 L645.6 392.2 L646.6 388.9 L647.6 390.3 L648.5 390.0 L649.5 390.7 L650.5 389.8 L651.5 392.2 L652.5 391.6 L653.4 391.6 L654.4 390.3 L655.4 391.5 L656.4 392.4 L657.3 392.2 L658.3 390.3 L659.3 389.0 L660.2 387.9 L661.2 385.3 L662.2 391.6 L663.2 389.2 L664.1 391.1 L665.1 390.8 L666.1 392.2 L667.1 390.6 L668.0 390.9 L669.0 389.4 L670.0 390.2 L671.0 390.1 L672.0 390.2 L672.9 392.0 L673.9 391.5 L674.9 391.4 L675.9 389.0 L676.8 391.4 L677.8 391.9 L678.8 392.5 L679.8 391.6 L680.7 389.8 L681.7 390.0 L682.7 388.9 L683.6 389.2 L684.6 385.1 L685.6 387.5 L686.6 390.7 L687.5 390.0 L688.5 389.7 L689.5 390.1 L690.5 391.0 L691.5 389.8 L692.4 388.7 L693.4 390.6 L694.4 391.7 L695.4 389.4 L696.3 391.0 L697.3 390.1 L698.3 389.9 L699.2 389.3 L700.2 391.3 L701.2 392.6 L702.2 390.3 L703.1 392.1 L704.1 390.3 L705.1 391.0 L706.1 389.3 L707.0 389.1 L708.0 385.1 L709.0 388.2 L710.0 389.6 L711.0 390.9 L711.9 389.9 L712.9 390.5 L713.9 389.5 L714.9 389.7 L715.8 391.0 L716.8 389.7 L717.8 389.3 L718.8 389.3 L719.7 389.3 L720.7 389.5 L721.7 390.6 L722.6 392.5 L723.6 391.2 L724.6 391.2 L725.6 390.1 L726.5 388.9 L727.5 389.9 L728.5 390.8 L729.5 391.0 L730.5 388.9 L731.4 383.6 L732.4 390.2 L733.4 390.7 L734.4 390.4 L735.3 390.5 L736.3 390.0 L737.3 390.7 L738.2 392.1 L739.2 391.2 L740.2 390.3 L741.2 389.6 L742.1 390.7 L743.1 388.0 L744.1 390.1 L745.1 390.7 L746.0 389.7 L747.0 388.8 L748.0 389.2 L749.0 389.4 L750.0 389.8 L750.9 388.8 L751.9 391.8 L752.9 389.0 L753.9 388.9 L754.8 385.9 L755.8 389.4 L756.8 390.5 L757.8 389.6 L758.7 391.4 L759.7 390.0 L760.7 391.4 L761.6 389.7 L762.6 392.0 L763.6 389.8 L764.6 390.8 L765.5 389.0 L766.5 388.5 L767.5 391.3 L768.5 390.0 L769.5 391.3 L770.4 391.8 L771.4 391.0 L772.4 390.0 L773.4 390.8 L774.3 389.4 L775.3 390.9 L776.3 391.8 L777.2 390.7 L778.2 386.5 L779.2 388.8 L780.2 391.0 L781.1 389.9 L782.1 388.6 L783.1 390.9 L784.1 390.4 L785.0 390.4 L786.0 390.9 L787.0 392.4 L788.0 389.1 L789.0 391.8 L789.9 391.8 L790.9 388.7 L791.9 388.9 L792.9 388.3 L793.8 390.5 L794.8 391.7 L795.8 390.0 L796.8 390.5 L797.7 391.1 L798.7 390.9 L799.7 388.4 L800.6 390.7 L801.6 385.6 L802.6 388.1 L803.6 391.1 L804.5 389.1 L805.5 389.4 L806.5 389.0 L807.5 391.6 L808.5 390.0 L809.4 389.5 L810.4 388.9 L811.4 390.0 L812.4 389.2 L813.3 391.7 L814.3 389.7 L815.3 391.9 L816.2 389.2 L817.2 389.9 L818.2 391.2 L819.2 390.0 L820.1 388.5 L821.1 389.5 L822.1 389.1 L823.1 390.3 L824.0 387.4 L825.0 386.7 L826.0 388.6 L827.0 389.1 L828.0 390.4 L828.9 390.7 L829.9 389.3 L830.9 392.0 L831.9 391.5 L832.8 390.0 L833.8 391.9 L834.8 391.6 L835.8 390.1 L836.7 390.6 L837.7 390.6 L838.7 390.4 L839.6 391.9 L840.6 391.8 L841.6 391.5 L842.6 390.3 L843.5 392.0 L844.5 390.9 L845.5 390.8 L846.5 390.4 L847.5 388.5 L848.4 385.7 L849.4 387.9 L850.4 388.8 L851.4 390.1 L852.3 389.0 L853.3 391.9 L854.3 391.5 L855.2 389.6 L856.2 390.9 L857.2 390.3 L858.2 391.7 L859.1 390.2 L860.1 389.5 L861.1 395.1 L862.1 393.3 L863.0 393.3 L864.0 392.9 L865.0 394.6 L866.0 395.7 L867.0 394.5 L867.9 394.7 L868.9 393.2 L869.9 396.3 L870.9 390.9 L871.8 389.6 L872.8 395.9 L873.8 396.9 L874.8 397.0 L875.7 395.4 L876.7 395.5 L877.7 396.5 L878.6 392.6 L879.6 392.4 L880.6 394.2 L881.6 394.1 L882.5 394.3 L883.5 395.3 L884.5 394.6 L885.5 384.0 L886.5 386.7 L887.4 387.1 L888.4 385.6 L889.4 385.0 L890.4 384.4 L891.3 385.2 L892.3 384.9 L893.3 385.3 L894.2 383.6 L895.2 382.3 L896.2 383.2 L897.2 385.8 L898.1 384.2 L899.1 384.1 L900.1 382.1 L901.1 385.5 L902.0 387.1 L903.0 386.5 L904.0 385.3 L905.0 385.7 L906.0 382.8 L906.9 386.8 L907.9 387.5 L908.9 384.1 L909.9 384.1 L910.8 385.3 L911.8 382.0 L912.8 386.1 L913.8 383.3 L914.7 388.1 L915.7 384.2 L916.7 382.8 L917.6 382.3 L918.6 380.6 L919.6 381.0 L920.6 384.3 L921.5 384.3 L922.5 387.3 L923.5 386.7 L924.5 386.4 L925.5 384.6 L926.4 386.3 L927.4 385.4 L928.4 386.7 L929.4 385.1 L930.3 384.9 L931.3 384.9 L932.3 384.5 L933.2 387.6 L934.2 383.5 L935.2 386.6 L936.2 387.3 L937.1 385.5 L938.1 386.3 L939.1 386.8 L940.1 383.3 L941.0 383.6 L942.0 380.2 L943.0 386.1 L944.0 385.7 L945.0 387.4 L945.9 384.3 L946.9 384.9 L947.9 384.7 L948.9 384.3 L949.8 386.8 L950.8 384.8 L951.8 384.6 L952.8 386.8 L953.7 384.8 L954.7 384.3 L955.7 385.1 L956.6 382.2 L957.6 382.7 L958.6 384.6 L959.6 383.8 L960.5 383.9 L961.5 385.0 L962.5 385.8 L963.5 386.8 L964.5 381.2 L965.4 375.6 L966.4 383.8 L967.4 387.7 L968.4 384.9 L969.3 385.6 L970.3 386.0 L971.3 383.5 L972.2 387.6 L973.2 381.2 L974.2 386.6 L975.2 382.4 L976.1 385.8 L977.1 382.7 L978.1 383.8 L979.1 383.4 L980.0 380.3 L981.0 379.7 L982.0 381.9 L983.0 379.1 L984.0 381.6 L984.9 383.9 L985.9 381.4 L986.9 383.3 L987.9 383.4 L988.8 374.3 L989.8 382.4 L990.8 384.2 L991.8 379.9 L992.7 380.2 L993.7 382.2 L994.7 384.3 L995.6 382.7 L996.6 380.4 L997.6 382.8 L998.6 384.2 L999.5 383.6 L1000.5 382.6 L1001.5 384.2 L1002.5 380.7 L1003.5 380.5 L1004.4 380.9 L1005.4 381.4 L1006.4 379.6 L1007.4 382.7 L1008.3 381.1 L1009.3 384.6 L1010.3 381.0 L1011.2 381.4 L1012.2 376.9 L1013.2 380.0 L1014.2 383.2 L1015.1 381.9 L1016.1 380.4 L1017.1 379.5 L1018.1 381.3 L1019.0 385.2 L1020.0 383.9 L1021.0 381.2 L1022.0 382.7 L1023.0 381.5 L1023.9 379.6 L1024.9 381.5 L1025.9 380.8 L1026.8 380.0 L1027.8 383.2 L1028.8 385.7 L1029.8 380.8 L1030.8 380.0 L1031.7 380.2 L1032.7 380.5 L1033.7 381.4 L1034.7 380.6 L1035.6 376.9 L1036.6 382.5 L1037.6 381.4 L1038.5 385.5 L1039.5 383.9 L1040.5 386.6 L1041.5 383.1 L1042.5 381.7 L1043.4 380.9 L1044.4 385.7 L1045.4 384.7 L1046.3 383.9 L1047.3 381.6 L1048.3 384.1 L1049.3 381.6 L1050.2 384.7 L1051.2 382.5 L1052.2 385.1 L1053.2 382.7 L1054.2 379.2 L1055.1 380.8 L1056.1 379.9 L1057.1 383.2 L1058.0 380.3 L1059.0 377.8 L1060.0 379.7 L1061.0 382.0 L1062.0 379.1 L1062.9 380.7 L1063.9 382.6 L1064.9 383.5 L1065.8 384.6 L1066.8 381.9 L1067.8 379.3 L1068.8 382.5 L1069.8 382.0 L1070.7 385.6 L1071.7 385.3 L1072.7 383.8 L1073.7 384.3 L1074.6 380.4 L1075.6 383.9 L1076.6 383.4 L1077.5 383.2 L1078.5 383.1 L1079.5 382.3 L1080.5 382.4 L1081.5 381.4 L1082.4 374.9 L1083.4 380.2 L1084.4 382.1 L1085.3 384.5 L1086.3 383.6 L1087.3 382.7 L1088.3 384.3 L1089.2 382.9 L1090.2 381.5 L1091.2 382.9 L1092.2 381.8 L1093.2 381.9 L1094.1 386.2 L1095.1 383.2 L1096.1 382.0 L1097.0 380.1 L1098.0 384.3 L1099.0 385.7 L1099.0 484.8 L1098.0 484.0 L1097.0 480.2 L1096.1 481.3 L1095.1 482.2 L1094.1 484.5 L1093.2 481.7 L1092.2 482.4 L1091.2 481.3 L1090.2 481.7 L1089.2 482.6 L1088.3 484.0 L1087.3 483.0 L1086.3 485.0 L1085.3 485.0 L1084.4 481.3 L1083.4 481.5 L1082.4 475.6 L1081.5 481.0 L1080.5 481.2 L1079.5 481.6 L1078.5 482.1 L1077.5 482.9 L1076.6 481.8 L1075.6 482.0 L1074.6 479.6 L1073.7 484.8 L1072.7 482.3 L1071.7 483.9 L1070.7 484.3 L1069.8 481.5 L1068.8 483.5 L1067.8 479.9 L1066.8 481.9 L1065.8 484.7 L1064.9 483.8 L1063.9 480.8 L1062.9 480.4 L1062.0 479.4 L1061.0 482.3 L1060.0 480.0 L1059.0 476.9 L1058.0 479.3 L1057.1 482.7 L1056.1 479.7 L1055.1 481.5 L1054.2 480.1 L1053.2 482.4 L1052.2 485.2 L1051.2 483.4 L1050.2 484.9 L1049.3 480.8 L1048.3 482.4 L1047.3 481.1 L1046.3 484.7 L1045.4 483.4 L1044.4 485.1 L1043.4 482.3 L1042.5 482.5 L1041.5 482.1 L1040.5 485.3 L1039.5 484.6 L1038.5 484.0 L1037.6 481.5 L1036.6 482.8 L1035.6 476.9 L1034.7 480.2 L1033.7 480.1 L1032.7 480.0 L1031.7 480.0 L1030.8 480.8 L1029.8 480.3 L1028.8 484.5 L1027.8 482.1 L1026.8 479.1 L1025.9 479.7 L1024.9 480.6 L1023.9 480.7 L1023.0 482.5 L1022.0 482.0 L1021.0 479.8 L1020.0 483.8 L1019.0 484.2 L1018.1 482.1 L1017.1 479.1 L1016.1 480.1 L1015.1 480.4 L1014.2 482.1 L1013.2 481.0 L1012.2 475.9 L1011.2 482.2 L1010.3 479.9 L1009.3 484.0 L1008.3 480.6 L1007.4 482.7 L1006.4 480.3 L1005.4 480.2 L1004.4 480.4 L1003.5 480.1 L1002.5 479.5 L1001.5 484.0 L1000.5 481.3 L999.5 484.9 L998.6 484.8 L997.6 481.4 L996.6 481.1 L995.6 483.6 L994.7 485.1 L993.7 481.1 L992.7 481.1 L991.8 480.5 L990.8 484.6 L989.8 482.2 L988.8 474.9 L987.9 483.1 L986.9 482.8 L985.9 480.1 L984.9 484.5 L984.0 480.6 L983.0 480.8 L982.0 483.4 L981.0 480.7 L980.0 481.6 L979.1 484.4 L978.1 483.8 L977.1 481.2 L976.1 483.8 L975.2 481.0 L974.2 485.3 L973.2 481.3 L972.2 486.0 L971.3 483.2 L970.3 484.7 L969.3 486.2 L968.4 484.7 L967.4 486.3 L966.4 483.1 L965.4 477.1 L964.5 482.2 L963.5 485.8 L962.5 485.8 L961.5 484.4 L960.5 482.6 L959.6 484.3 L958.6 486.1 L957.6 484.4 L956.6 483.7 L955.7 485.4 L954.7 484.1 L953.7 485.9 L952.8 486.9 L951.8 484.4 L950.8 484.2 L949.8 486.7 L948.9 485.6 L947.9 484.7 L946.9 484.5 L945.9 484.3 L945.0 486.4 L944.0 485.1 L943.0 486.0 L942.0 482.2 L941.0 484.3 L940.1 485.0 L939.1 486.3 L938.1 487.3 L937.1 486.2 L936.2 486.3 L935.2 486.5 L934.2 485.2 L933.2 487.5 L932.3 485.4 L931.3 485.3 L930.3 486.4 L929.4 485.4 L928.4 487.1 L927.4 485.1 L926.4 486.5 L925.5 486.8 L924.5 487.5 L923.5 486.4 L922.5 487.0 L921.5 484.0 L920.6 484.7 L919.6 483.4 L918.6 482.4 L917.6 482.7 L916.7 484.7 L915.7 485.6 L914.7 487.3 L913.8 484.0 L912.8 485.9 L911.8 484.2 L910.8 487.4 L909.9 485.0 L908.9 485.0 L907.9 487.2 L906.9 487.3 L906.0 484.6 L905.0 485.7 L904.0 486.6 L903.0 486.4 L902.0 487.4 L901.1 486.0 L900.1 483.9 L899.1 485.8 L898.1 484.1 L897.2 486.1 L896.2 484.2 L895.2 482.6 L894.2 484.6 L893.3 485.0 L892.3 485.6 L891.3 486.8 L890.4 485.4 L889.4 486.4 L888.4 487.5 L887.4 487.5 L886.5 486.6 L885.5 486.5 L884.5 487.5 L883.5 487.1 L882.5 485.8 L881.6 487.2 L880.6 485.6 L879.6 484.0 L878.6 484.9 L877.7 487.3 L876.7 486.1 L875.7 487.2 L874.8 486.6 L873.8 487.4 L872.8 486.3 L871.8 481.7 L870.9 483.4 L869.9 487.5 L868.9 486.4 L867.9 486.7 L867.0 484.1 L866.0 485.2 L865.0 485.4 L864.0 484.6 L863.0 483.8 L862.1 485.0 L861.1 487.0 L860.1 484.4 L859.1 485.7 L858.2 486.2 L857.2 484.8 L856.2 486.2 L855.2 484.5 L854.3 487.1 L853.3 487.4 L852.3 484.9 L851.4 485.5 L850.4 485.4 L849.4 484.2 L848.4 481.7 L847.5 483.6 L846.5 485.9 L845.5 485.9 L844.5 486.3 L843.5 487.5 L842.6 486.0 L841.6 485.8 L840.6 486.5 L839.6 486.5 L838.7 485.7 L837.7 486.3 L836.7 485.4 L835.8 485.2 L834.8 486.6 L833.8 486.7 L832.8 484.8 L831.9 486.2 L830.9 486.6 L829.9 484.4 L828.9 485.8 L828.0 485.3 L827.0 484.6 L826.0 483.6 L825.0 481.8 L824.0 483.3 L823.1 486.6 L822.1 485.1 L821.1 485.0 L820.1 484.4 L819.2 485.2 L818.2 487.3 L817.2 486.0 L816.2 484.7 L815.3 487.1 L814.3 485.3 L813.3 486.7 L812.4 484.8 L811.4 485.7 L810.4 484.5 L809.4 484.2 L808.5 485.5 L807.5 486.7 L806.5 484.2 L805.5 485.7 L804.5 485.1 L803.6 486.9 L802.6 483.5 L801.6 480.9 L800.6 485.6 L799.7 485.2 L798.7 487.2 L797.7 486.7 L796.8 486.0 L795.8 486.6 L794.8 487.5 L793.8 486.6 L792.9 484.6 L791.9 485.1 L790.9 485.0 L789.9 487.2 L789.0 487.1 L788.0 485.4 L787.0 487.5 L786.0 487.2 L785.0 485.8 L784.1 486.9 L783.1 486.6 L782.1 484.9 L781.1 485.0 L780.2 487.3 L779.2 484.2 L778.2 481.8 L777.2 485.7 L776.3 487.5 L775.3 486.4 L774.3 485.7 L773.4 486.8 L772.4 485.4 L771.4 487.3 L770.4 486.6 L769.5 486.9 L768.5 485.4 L767.5 486.5 L766.5 484.6 L765.5 485.3 L764.6 485.9 L763.6 484.7 L762.6 487.2 L761.6 485.6 L760.7 486.4 L759.7 485.2 L758.7 486.1 L757.8 484.8 L756.8 486.1 L755.8 484.2 L754.8 480.9 L753.9 485.1 L752.9 485.5 L751.9 487.1 L750.9 484.9 L750.0 484.9 L749.0 485.1 L748.0 485.2 L747.0 485.7 L746.0 486.7 L745.1 487.3 L744.1 486.3 L743.1 484.6 L742.1 486.3 L741.2 485.4 L740.2 486.9 L739.2 487.0 L738.2 487.5 L737.3 485.7 L736.3 484.9 L735.3 486.3 L734.4 486.6 L733.4 487.0 L732.4 485.4 L731.4 480.2 L730.5 485.2 L729.5 487.4 L728.5 486.9 L727.5 484.9 L726.5 484.7 L725.6 485.1 L724.6 486.2 L723.6 487.1 L722.6 487.1 L721.7 485.7 L720.7 486.0 L719.7 484.8 L718.8 486.1 L717.8 485.9 L716.8 486.1 L715.8 486.9 L714.9 486.0 L713.9 485.9 L712.9 485.8 L711.9 485.5 L711.0 486.2 L710.0 484.6 L709.0 483.5 L708.0 480.3 L707.0 485.0 L706.1 485.1 L705.1 485.7 L704.1 485.2 L703.1 487.2 L702.2 484.9 L701.2 487.5 L700.2 487.4 L699.2 484.9 L698.3 485.4 L697.3 485.8 L696.3 487.2 L695.4 484.8 L694.4 487.2 L693.4 485.8 L692.4 485.2 L691.5 485.7 L690.5 485.8 L689.5 485.5 L688.5 485.3 L687.5 485.1 L686.6 486.1 L685.6 483.6 L684.6 480.3 L683.6 485.4 L682.7 485.1 L681.7 485.3 L680.7 485.7 L679.8 486.5 L678.8 487.0 L677.8 487.2 L676.8 486.2 L675.9 485.1 L674.9 487.3 L673.9 486.1 L672.9 486.6 L672.0 486.1 L671.0 485.5 L670.0 485.0 L669.0 485.2 L668.0 486.2 L667.1 485.0 L666.1 486.8 L665.1 485.9 L664.1 486.6 L663.2 485.0 L662.2 486.2 L661.2 481.2 L660.2 484.1 L659.3 484.8 L658.3 485.6 L657.3 487.0 L656.4 487.0 L655.4 486.0 L654.4 485.8 L653.4 486.2 L652.5 487.5 L651.5 486.8 L650.5 485.6 L649.5 486.4 L648.5 485.5 L647.6 485.2 L646.6 484.8 L645.6 487.2 L644.6 487.4 L643.7 487.2 L642.7 484.9 L641.7 487.2 L640.8 487.4 L639.8 485.6 L638.8 484.0 L637.8 480.8 L636.9 485.7 L635.9 485.7 L634.9 486.8 L633.9 485.7 L633.0 485.0 L632.0 485.8 L631.0 486.5 L630.0 485.1 L629.0 485.4 L628.1 485.4 L627.1 487.5 L626.1 486.9 L625.1 486.5 L624.2 484.8 L623.2 486.6 L622.2 486.6 L621.2 485.5 L620.3 485.5 L619.3 487.2 L618.3 486.0 L617.4 486.4 L616.4 486.2 L615.4 483.8 L614.4 480.4 L613.5 485.5 L612.5 486.9 L611.5 486.0 L610.5 486.8 L609.5 486.1 L608.6 485.4 L607.6 486.9 L606.6 484.7 L605.6 487.2 L604.7 484.8 L603.7 487.4 L602.7 485.4 L601.8 487.1 L600.8 484.8 L599.8 484.8 L598.8 486.2 L597.9 486.8 L596.9 485.3 L595.9 485.5 L594.9 485.2 L594.0 487.4 L593.0 487.2 L592.0 484.0 L591.0 480.6 L590.0 486.4 L589.1 485.8 L588.1 487.4 L587.1 486.6 L586.1 486.8 L585.2 486.3 L584.2 486.6 L583.2 487.5 L582.2 486.3 L581.3 487.3 L580.3 484.9 L579.3 486.0 L578.4 487.5 L577.4 485.6 L576.4 487.4 L575.4 486.8 L574.5 485.5 L573.5 485.4 L572.5 484.7 L571.5 487.4 L570.5 487.1 L569.6 484.9 L568.6 484.1 L567.6 482.4 L566.6 484.8 L565.7 486.1 L564.7 487.4 L563.7 485.0 L562.8 486.2 L561.8 486.5 L560.8 484.7 L559.8 485.4 L558.9 485.1 L557.9 484.9 L556.9 484.7 L555.9 485.8 L555.0 485.1 L554.0 484.0 L553.0 485.0 L552.0 485.2 L551.0 484.6 L550.1 484.8 L549.1 483.5 L548.1 483.5 L547.1 485.1 L546.2 485.4 L545.2 483.6 L544.2 480.4 L543.2 484.5 L542.3 485.1 L541.3 485.9 L540.3 485.6 L539.4 485.1 L538.4 483.8 L537.4 483.4 L536.4 484.0 L535.5 483.8 L534.5 484.3 L533.5 484.1 L532.5 484.7 L531.5 484.0 L530.6 484.5 L529.6 484.2 L528.6 485.4 L527.6 483.9 L526.7 483.7 L525.7 484.5 L524.7 485.5 L523.8 485.1 L522.8 485.5 L521.8 484.3 L520.8 479.6 L519.9 483.9 L518.9 483.4 L517.9 484.5 L516.9 484.0 L516.0 483.5 L515.0 483.9 L514.0 484.0 L513.0 484.1 L512.0 483.6 L511.1 485.2 L510.1 483.5 L509.1 483.5 L508.1 484.7 L507.2 484.0 L506.2 484.5 L505.2 485.2 L504.2 483.8 L503.3 485.8 L502.3 484.9 L501.3 484.5 L500.4 485.1 L499.4 484.1 L498.4 482.7 L497.4 479.5 L496.4 482.7 L495.5 483.7 L494.5 483.8 L493.5 484.9 L492.6 483.5 L491.6 483.8 L490.6 484.8 L489.6 485.5 L488.6 484.6 L487.7 485.1 L486.7 484.9 L485.7 485.3 L484.8 485.3 L483.8 487.1 L482.8 487.0 L481.8 487.0 L480.9 486.7 L479.9 486.8 L478.9 487.1 L477.9 487.3 L476.9 487.1 L476.0 487.3 L475.0 485.8 L474.0 482.3 L473.1 486.3 L472.1 487.4 L471.1 487.4 L470.1 487.1 L469.1 487.4 L468.2 487.2 L467.2 486.7 L466.2 487.4 L465.2 487.4 L464.3 487.3 L463.3 487.2 L462.3 487.1 L461.4 487.2 L460.4 487.3 L459.4 486.8 L458.4 486.9 L457.4 487.4 L456.5 487.1 L455.5 486.6 L454.5 487.0 L453.6 487.3 L452.6 487.4 L451.6 485.9 L450.6 482.6 L449.6 486.1 L448.7 487.4 L447.7 487.1 L446.7 487.4 L445.8 487.2 L444.8 486.7 L443.8 486.9 L442.8 486.7 L441.9 486.8 L440.9 487.3 L439.9 486.6 L438.9 486.6 L437.9 486.8 L437.0 487.1 L436.0 486.9 L435.0 487.2 L434.1 487.2 L433.1 487.1 L432.1 486.9 L431.1 486.8 L430.1 486.8 L429.2 486.7 L428.2 486.1 L427.2 483.7 L426.2 486.3 L425.3 487.3 L424.3 486.7 L423.3 486.7 L422.4 486.6 L421.4 486.8 L420.4 487.1 L419.4 487.2 L418.4 487.3 L417.5 487.1 L416.5 487.3 L415.5 487.1 L414.6 486.7 L413.6 486.7 L412.6 487.2 L411.6 487.1 L410.6 487.2 L409.7 487.1 L408.7 487.1 L407.7 486.7 L406.8 487.1 L405.8 487.2 L404.8 485.9 L403.8 483.0 L402.9 486.2 L401.9 486.8 L400.9 486.9 L399.9 486.9 L398.9 486.6 L398.0 486.6 L397.0 486.9 Z" fill="#5c149a" fill-opacity="0.3"/>
<path d="M397.0 486.9 L398.0 486.6 L398.9 486.6 L399.9 486.9 L400.9 486.9 L401.9 486.8 L402.9 486.2 L403.8 483.0 L404.8 485.9 L405.8 487.2 L406.8 487.1 L407.7 486.7 L408.7 487.1 L409.7 487.1 L410.6 487.2 L411.6 487.1 L412.6 487.2 L413.6 486.7 L414.6 486.7 L415.5 487.1 L416.5 487.3 L417.5 487.1 L418.4 487.3 L419.4 487.2 L420.4 487.1 L421.4 486.8 L422.4 486.6 L423.3 486.7 L424.3 486.7 L425.3 487.3 L426.2 486.3 L427.2 483.7 L428.2 486.1 L429.2 486.7 L430.1 486.8 L431.1 486.8 L432.1 486.9 L433.1 487.1 L434.1 487.2 L435.0 487.2 L436.0 486.9 L437.0 487.1 L437.9 486.8 L438.9 486.6 L439.9 486.6 L440.9 487.3 L441.9 486.8 L442.8 486.7 L443.8 486.9 L444.8 486.7 L445.8 487.2 L446.7 487.4 L447.7 487.1 L448.7 487.4 L449.6 486.1 L450.6 482.6 L451.6 485.9 L452.6 487.4 L453.6 487.3 L454.5 487.0 L455.5 486.6 L456.5 487.1 L457.4 487.4 L458.4 486.9 L459.4 486.8 L460.4 487.3 L461.4 487.2 L462.3 487.1 L463.3 487.2 L464.3 487.3 L465.2 487.4 L466.2 487.4 L467.2 486.7 L468.2 487.2 L469.1 487.4 L470.1 487.1 L471.1 487.4 L472.1 487.4 L473.1 486.3 L474.0 482.3 L475.0 485.8 L476.0 487.3 L476.9 487.1 L477.9 487.3 L478.9 487.1 L479.9 486.8 L480.9 486.7 L481.8 487.0 L482.8 487.0 L483.8 487.1 L484.8 485.3 L485.7 485.3 L486.7 484.9 L487.7 485.1 L488.6 484.6 L489.6 485.5 L490.6 484.8 L491.6 483.8 L492.6 483.5 L493.5 484.9 L494.5 483.8 L495.5 483.7 L496.4 482.7 L497.4 479.5 L498.4 482.7 L499.4 484.1 L500.4 485.1 L501.3 484.5 L502.3 484.9 L503.3 485.8 L504.2 483.8 L505.2 485.2 L506.2 484.5 L507.2 484.0 L508.1 484.7 L509.1 483.5 L510.1 483.5 L511.1 485.2 L512.0 483.6 L513.0 484.1 L514.0 484.0 L515.0 483.9 L516.0 483.5 L516.9 484.0 L517.9 484.5 L518.9 483.4 L519.9 483.9 L520.8 479.6 L521.8 484.3 L522.8 485.5 L523.8 485.1 L524.7 485.5 L525.7 484.5 L526.7 483.7 L527.6 483.9 L528.6 485.4 L529.6 484.2 L530.6 484.5 L531.5 484.0 L532.5 484.7 L533.5 484.1 L534.5 484.3 L535.5 483.8 L536.4 484.0 L537.4 483.4 L538.4 483.8 L539.4 485.1 L540.3 485.6 L541.3 485.9 L542.3 485.1 L543.2 484.5 L544.2 480.4 L545.2 483.6 L546.2 485.4 L547.1 485.1 L548.1 483.5 L549.1 483.5 L550.1 484.8 L551.0 484.6 L552.0 485.2 L553.0 485.0 L554.0 484.0 L555.0 485.1 L555.9 485.8 L556.9 484.7 L557.9 484.9 L558.9 485.1 L559.8 485.4 L560.8 484.7 L561.8 486.5 L562.8 486.2 L563.7 485.0 L564.7 487.4 L565.7 486.1 L566.6 484.8 L567.6 482.4 L568.6 484.1 L569.6 484.9 L570.5 487.1 L571.5 487.4 L572.5 484.7 L573.5 485.4 L574.5 485.5 L575.4 486.8 L576.4 487.4 L577.4 485.6 L578.4 487.5 L579.3 486.0 L580.3 484.9 L581.3 487.3 L582.2 486.3 L583.2 487.5 L584.2 486.6 L585.2 486.3 L586.1 486.8 L587.1 486.6 L588.1 487.4 L589.1 485.8 L590.0 486.4 L591.0 480.6 L592.0 484.0 L593.0 487.2 L594.0 487.4 L594.9 485.2 L595.9 485.5 L596.9 485.3 L597.9 486.8 L598.8 486.2 L599.8 484.8 L600.8 484.8 L601.8 487.1 L602.7 485.4 L603.7 487.4 L604.7 484.8 L605.6 487.2 L606.6 484.7 L607.6 486.9 L608.6 485.4 L609.5 486.1 L610.5 486.8 L611.5 486.0 L612.5 486.9 L613.5 485.5 L614.4 480.4 L615.4 483.8 L616.4 486.2 L617.4 486.4 L618.3 486.0 L619.3 487.2 L620.3 485.5 L621.2 485.5 L622.2 486.6 L623.2 486.6 L624.2 484.8 L625.1 486.5 L626.1 486.9 L627.1 487.5 L628.1 485.4 L629.0 485.4 L630.0 485.1 L631.0 486.5 L632.0 485.8 L633.0 485.0 L633.9 485.7 L634.9 486.8 L635.9 485.7 L636.9 485.7 L637.8 480.8 L638.8 484.0 L639.8 485.6 L640.8 487.4 L641.7 487.2 L642.7 484.9 L643.7 487.2 L644.6 487.4 L645.6 487.2 L646.6 484.8 L647.6 485.2 L648.5 485.5 L649.5 486.4 L650.5 485.6 L651.5 486.8 L652.5 487.5 L653.4 486.2 L654.4 485.8 L655.4 486.0 L656.4 487.0 L657.3 487.0 L658.3 485.6 L659.3 484.8 L660.2 484.1 L661.2 481.2 L662.2 486.2 L663.2 485.0 L664.1 486.6 L665.1 485.9 L666.1 486.8 L667.1 485.0 L668.0 486.2 L669.0 485.2 L670.0 485.0 L671.0 485.5 L672.0 486.1 L672.9 486.6 L673.9 486.1 L674.9 487.3 L675.9 485.1 L676.8 486.2 L677.8 487.2 L678.8 487.0 L679.8 486.5 L680.7 485.7 L681.7 485.3 L682.7 485.1 L683.6 485.4 L684.6 480.3 L685.6 483.6 L686.6 486.1 L687.5 485.1 L688.5 485.3 L689.5 485.5 L690.5 485.8 L691.5 485.7 L692.4 485.2 L693.4 485.8 L694.4 487.2 L695.4 484.8 L696.3 487.2 L697.3 485.8 L698.3 485.4 L699.2 484.9 L700.2 487.4 L701.2 487.5 L702.2 484.9 L703.1 487.2 L704.1 485.2 L705.1 485.7 L706.1 485.1 L707.0 485.0 L708.0 480.3 L709.0 483.5 L710.0 484.6 L711.0 486.2 L711.9 485.5 L712.9 485.8 L713.9 485.9 L714.9 486.0 L715.8 486.9 L716.8 486.1 L717.8 485.9 L718.8 486.1 L719.7 484.8 L720.7 486.0 L721.7 485.7 L722.6 487.1 L723.6 487.1 L724.6 486.2 L725.6 485.1 L726.5 484.7 L727.5 484.9 L728.5 486.9 L729.5 487.4 L730.5 485.2 L731.4 480.2 L732.4 485.4 L733.4 487.0 L734.4 486.6 L735.3 486.3 L736.3 484.9 L737.3 485.7 L738.2 487.5 L739.2 487.0 L740.2 486.9 L741.2 485.4 L742.1 486.3 L743.1 484.6 L744.1 486.3 L745.1 487.3 L746.0 486.7 L747.0 485.7 L748.0 485.2 L749.0 485.1 L750.0 484.9 L750.9 484.9 L751.9 487.1 L752.9 485.5 L753.9 485.1 L754.8 480.9 L755.8 484.2 L756.8 486.1 L757.8 484.8 L758.7 486.1 L759.7 485.2 L760.7 486.4 L761.6 485.6 L762.6 487.2 L763.6 484.7 L764.6 485.9 L765.5 485.3 L766.5 484.6 L767.5 486.5 L768.5 485.4 L769.5 486.9 L770.4 486.6 L771.4 487.3 L772.4 485.4 L773.4 486.8 L774.3 485.7 L775.3 486.4 L776.3 487.5 L777.2 485.7 L778.2 481.8 L779.2 484.2 L780.2 487.3 L781.1 485.0 L782.1 484.9 L783.1 486.6 L784.1 486.9 L785.0 485.8 L786.0 487.2 L787.0 487.5 L788.0 485.4 L789.0 487.1 L789.9 487.2 L790.9 485.0 L791.9 485.1 L792.9 484.6 L793.8 486.6 L794.8 487.5 L795.8 486.6 L796.8 486.0 L797.7 486.7 L798.7 487.2 L799.7 485.2 L800.6 485.6 L801.6 480.9 L802.6 483.5 L803.6 486.9 L804.5 485.1 L805.5 485.7 L806.5 484.2 L807.5 486.7 L808.5 485.5 L809.4 484.2 L810.4 484.5 L811.4 485.7 L812.4 484.8 L813.3 486.7 L814.3 485.3 L815.3 487.1 L816.2 484.7 L817.2 486.0 L818.2 487.3 L819.2 485.2 L820.1 484.4 L821.1 485.0 L822.1 485.1 L823.1 486.6 L824.0 483.3 L825.0 481.8 L826.0 483.6 L827.0 484.6 L828.0 485.3 L828.9 485.8 L829.9 484.4 L830.9 486.6 L831.9 486.2 L832.8 484.8 L833.8 486.7 L834.8 486.6 L835.8 485.2 L836.7 485.4 L837.7 486.3 L838.7 485.7 L839.6 486.5 L840.6 486.5 L841.6 485.8 L842.6 486.0 L843.5 487.5 L844.5 486.3 L845.5 485.9 L846.5 485.9 L847.5 483.6 L848.4 481.7 L849.4 484.2 L850.4 485.4 L851.4 485.5 L852.3 484.9 L853.3 487.4 L854.3 487.1 L855.2 484.5 L856.2 486.2 L857.2 484.8 L858.2 486.2 L859.1 485.7 L860.1 484.4 L861.1 487.0 L862.1 485.0 L863.0 483.8 L864.0 484.6 L865.0 485.4 L866.0 485.2 L867.0 484.1 L867.9 486.7 L868.9 486.4 L869.9 487.5 L870.9 483.4 L871.8 481.7 L872.8 486.3 L873.8 487.4 L874.8 486.6 L875.7 487.2 L876.7 486.1 L877.7 487.3 L878.6 484.9 L879.6 484.0 L880.6 485.6 L881.6 487.2 L882.5 485.8 L883.5 487.1 L884.5 487.5 L885.5 486.5 L886.5 486.6 L887.4 487.5 L888.4 487.5 L889.4 486.4 L890.4 485.4 L891.3 486.8 L892.3 485.6 L893.3 485.0 L894.2 484.6 L895.2 482.6 L896.2 484.2 L897.2 486.1 L898.1 484.1 L899.1 485.8 L900.1 483.9 L901.1 486.0 L902.0 487.4 L903.0 486.4 L904.0 486.6 L905.0 485.7 L906.0 484.6 L906.9 487.3 L907.9 487.2 L908.9 485.0 L909.9 485.0 L910.8 487.4 L911.8 484.2 L912.8 485.9 L913.8 484.0 L914.7 487.3 L915.7 485.6 L916.7 484.7 L917.6 482.7 L918.6 482.4 L919.6 483.4 L920.6 484.7 L921.5 484.0 L922.5 487.0 L923.5 486.4 L924.5 487.5 L925.5 486.8 L926.4 486.5 L927.4 485.1 L928.4 487.1 L929.4 485.4 L930.3 486.4 L931.3 485.3 L932.3 485.4 L933.2 487.5 L934.2 485.2 L935.2 486.5 L936.2 486.3 L937.1 486.2 L938.1 487.3 L939.1 486.3 L940.1 485.0 L941.0 484.3 L942.0 482.2 L943.0 486.0 L944.0 485.1 L945.0 486.4 L945.9 484.3 L946.9 484.5 L947.9 484.7 L948.9 485.6 L949.8 486.7 L950.8 484.2 L951.8 484.4 L952.8 486.9 L953.7 485.9 L954.7 484.1 L955.7 485.4 L956.6 483.7 L957.6 484.4 L958.6 486.1 L959.6 484.3 L960.5 482.6 L961.5 484.4 L962.5 485.8 L963.5 485.8 L964.5 482.2 L965.4 477.1 L966.4 483.1 L967.4 486.3 L968.4 484.7 L969.3 486.2 L970.3 484.7 L971.3 483.2 L972.2 486.0 L973.2 481.3 L974.2 485.3 L975.2 481.0 L976.1 483.8 L977.1 481.2 L978.1 483.8 L979.1 484.4 L980.0 481.6 L981.0 480.7 L982.0 483.4 L983.0 480.8 L984.0 480.6 L984.9 484.5 L985.9 480.1 L986.9 482.8 L987.9 483.1 L988.8 474.9 L989.8 482.2 L990.8 484.6 L991.8 480.5 L992.7 481.1 L993.7 481.1 L994.7 485.1 L995.6 483.6 L996.6 481.1 L997.6 481.4 L998.6 484.8 L999.5 484.9 L1000.5 481.3 L1001.5 484.0 L1002.5 479.5 L1003.5 480.1 L1004.4 480.4 L1005.4 480.2 L1006.4 480.3 L1007.4 482.7 L1008.3 480.6 L1009.3 484.0 L1010.3 479.9 L1011.2 482.2 L1012.2 475.9 L1013.2 481.0 L1014.2 482.1 L1015.1 480.4 L1016.1 480.1 L1017.1 479.1 L1018.1 482.1 L1019.0 484.2 L1020.0 483.8 L1021.0 479.8 L1022.0 482.0 L1023.0 482.5 L1023.9 480.7 L1024.9 480.6 L1025.9 479.7 L1026.8 479.1 L1027.8 482.1 L1028.8 484.5 L1029.8 480.3 L1030.8 480.8 L1031.7 480.0 L1032.7 480.0 L1033.7 480.1 L1034.7 480.2 L1035.6 476.9 L1036.6 482.8 L1037.6 481.5 L1038.5 484.0 L1039.5 484.6 L1040.5 485.3 L1041.5 482.1 L1042.5 482.5 L1043.4 482.3 L1044.4 485.1 L1045.4 483.4 L1046.3 484.7 L1047.3 481.1 L1048.3 482.4 L1049.3 480.8 L1050.2 484.9 L1051.2 483.4 L1052.2 485.2 L1053.2 482.4 L1054.2 480.1 L1055.1 481.5 L1056.1 479.7 L1057.1 482.7 L1058.0 479.3 L1059.0 476.9 L1060.0 480.0 L1061.0 482.3 L1062.0 479.4 L1062.9 480.4 L1063.9 480.8 L1064.9 483.8 L1065.8 484.7 L1066.8 481.9 L1067.8 479.9 L1068.8 483.5 L1069.8 481.5 L1070.7 484.3 L1071.7 483.9 L1072.7 482.3 L1073.7 484.8 L1074.6 479.6 L1075.6 482.0 L1076.6 481.8 L1077.5 482.9 L1078.5 482.1 L1079.5 481.6 L1080.5 481.2 L1081.5 481.0 L1082.4 475.6 L1083.4 481.5 L1084.4 481.3 L1085.3 485.0 L1086.3 485.0 L1087.3 483.0 L1088.3 484.0 L1089.2 482.6 L1090.2 481.7 L1091.2 481.3 L1092.2 482.4 L1093.2 481.7 L1094.1 484.5 L1095.1 482.2 L1096.1 481.3 L1097.0 480.2 L1098.0 484.0 L1099.0 484.8 L1099.0 488.5 L397.0 488.5 Z" fill="#2f6cc0" fill-opacity="0.3"/>
<path d="M397.0 305.2 L398.0 304.5 L398.9 303.6 L399.9 303.7 L400.9 304.0 L401.9 305.9 L402.9 305.8 L403.8 302.4 L404.8 303.7 L405.8 305.1 L406.8 305.1 L407.7 303.9 L408.7 298.2 L409.7 298.2 L410.6 298.2 L411.6 305.7 L412.6 306.1 L413.6 305.3 L414.6 303.6 L415.5 305.0 L416.5 305.4 L417.5 304.8 L418.4 305.1 L419.4 305.3 L420.4 305.9 L421.4 305.2 L422.4 303.8 L423.3 305.0 L424.3 304.3 L425.3 304.6 L426.2 305.2 L427.2 302.6 L428.2 305.5 L429.2 304.0 L430.1 304.8 L431.1 297.8 L432.1 299.3 L433.1 298.8 L434.1 299.2 L435.0 305.7 L436.0 303.7 L437.0 303.4 L437.9 303.8 L438.9 303.2 L439.9 303.0 L440.9 303.8 L441.9 304.0 L442.8 305.6 L443.8 303.7 L444.8 303.7 L445.8 303.4 L446.7 303.8 L447.7 304.4 L448.7 305.4 L449.6 303.3 L450.6 302.5 L451.6 304.6 L452.6 305.8 L453.6 304.3 L454.5 296.4 L455.5 296.6 L456.5 297.6 L457.4 299.1 L458.4 297.0 L459.4 304.4 L460.4 304.6 L461.4 303.6 L462.3 305.2 L463.3 303.9 L464.3 305.1 L465.2 304.4 L466.2 303.9 L467.2 305.0 L468.2 305.3 L469.1 304.4 L470.1 303.1 L471.1 304.6 L472.1 305.5 L473.1 303.4 L474.0 301.6 L475.0 302.7 L476.0 299.4 L476.9 299.5 L477.9 299.8 L478.9 291.2 L479.9 291.8 L480.9 291.9 L481.8 291.5 L482.8 290.7 L483.8 295.3 L484.8 296.5 L485.7 296.7 L486.7 296.4 L487.7 307.1 L488.6 309.0 L489.6 307.5 L490.6 311.1 L491.6 307.9 L492.6 307.2 L493.5 313.6 L494.5 312.1 L495.5 314.1 L496.4 310.2 L497.4 310.8 L498.4 304.1 L499.4 303.1 L500.4 304.7 L501.3 303.0 L502.3 301.9 L503.3 308.4 L504.2 301.5 L505.2 302.2 L506.2 306.8 L507.2 307.1 L508.1 302.7 L509.1 303.7 L510.1 305.4 L511.1 307.3 L512.0 304.5 L513.0 307.4 L514.0 304.6 L515.0 301.8 L516.0 302.2 L516.9 303.1 L517.9 303.3 L518.9 300.5 L519.9 296.7 L520.8 294.1 L521.8 299.0 L522.8 303.4 L523.8 302.8 L524.7 304.6 L525.7 300.1 L526.7 294.7 L527.6 291.1 L528.6 304.5 L529.6 301.3 L530.6 300.6 L531.5 304.6 L532.5 304.8 L533.5 298.3 L534.5 301.0 L535.5 297.9 L536.4 304.3 L537.4 303.5 L538.4 305.6 L539.4 308.0 L540.3 305.7 L541.3 307.8 L542.3 308.1 L543.2 307.8 L544.2 303.6 L545.2 307.8 L546.2 309.5 L547.1 305.3 L548.1 304.1 L549.1 302.8 L550.1 300.6 L551.0 304.5 L552.0 306.8 L553.0 307.4 L554.0 303.8 L555.0 307.2 L555.9 306.0 L556.9 307.9 L557.9 303.9 L558.9 306.5 L559.8 302.7 L560.8 305.5 L561.8 305.4 L562.8 305.8 L563.7 304.1 L564.7 304.7 L565.7 308.6 L566.6 303.9 L567.6 303.7 L568.6 307.1 L569.6 305.9 L570.5 305.5 L571.5 304.2 L572.5 304.6 L573.5 304.2 L574.5 301.5 L575.4 301.0 L576.4 307.3 L577.4 305.2 L578.4 306.1 L579.3 303.2 L580.3 304.1 L581.3 305.0 L582.2 304.7 L583.2 308.5 L584.2 309.2 L585.2 304.3 L586.1 307.4 L587.1 303.7 L588.1 305.7 L589.1 306.5 L590.0 306.6 L591.0 302.0 L592.0 302.6 L593.0 304.7 L594.0 306.6 L594.9 302.8 L595.9 303.3 L596.9 303.7 L597.9 298.3 L598.8 301.4 L599.8 307.0 L600.8 305.9 L601.8 304.9 L602.7 304.7 L603.7 308.7 L604.7 305.8 L605.6 306.8 L606.6 307.0 L607.6 309.3 L608.6 303.5 L609.5 307.9 L610.5 307.9 L611.5 303.5 L612.5 307.8 L613.5 303.3 L614.4 303.1 L615.4 304.0 L616.4 304.0 L617.4 304.0 L618.3 306.5 L619.3 302.4 L620.3 300.8 L621.2 302.1 L622.2 303.9 L623.2 304.0 L624.2 303.6 L625.1 307.0 L626.1 303.8 L627.1 307.6 L628.1 306.2 L629.0 305.1 L630.0 303.6 L631.0 303.1 L632.0 307.2 L633.0 300.9 L633.9 306.9 L634.9 308.7 L635.9 307.3 L636.9 305.1 L637.8 300.0 L638.8 299.1 L639.8 297.6 L640.8 301.7 L641.7 304.5 L642.7 302.5 L643.7 303.4 L644.6 303.4 L645.6 301.5 L646.6 305.0 L647.6 306.3 L648.5 306.5 L649.5 305.3 L650.5 299.9 L651.5 304.8 L652.5 302.2 L653.4 306.6 L654.4 302.9 L655.4 301.6 L656.4 306.0 L657.3 303.0 L658.3 304.5 L659.3 303.8 L660.2 298.4 L661.2 302.4 L662.2 302.0 L663.2 301.6 L664.1 301.0 L665.1 303.4 L666.1 302.2 L667.1 296.0 L668.0 301.5 L669.0 299.8 L670.0 302.0 L671.0 304.9 L672.0 304.0 L672.9 300.2 L673.9 304.1 L674.9 300.9 L675.9 303.4 L676.8 301.3 L677.8 300.4 L678.8 299.5 L679.8 299.4 L680.7 298.3 L681.7 301.2 L682.7 298.7 L683.6 298.5 L684.6 297.5 L685.6 298.0 L686.6 297.7 L687.5 299.1 L688.5 300.6 L689.5 297.2 L690.5 299.0 L691.5 299.4 L692.4 301.6 L693.4 299.5 L694.4 298.2 L695.4 299.6 L696.3 300.7 L697.3 296.9 L698.3 301.5 L699.2 300.8 L700.2 297.4 L701.2 300.1 L702.2 298.3 L703.1 302.2 L704.1 297.5 L705.1 301.4 L706.1 298.0 L707.0 295.8 L708.0 298.3 L709.0 299.8 L710.0 296.4 L711.0 300.0 L711.9 299.4 L712.9 298.9 L713.9 289.5 L714.9 290.7 L715.8 287.7 L716.8 286.1 L717.8 287.9 L718.8 298.5 L719.7 299.6 L720.7 298.1 L721.7 296.1 L722.6 300.8 L723.6 302.1 L724.6 301.9 L725.6 301.3 L726.5 299.4 L727.5 296.7 L728.5 298.3 L729.5 297.0 L730.5 294.0 L731.4 296.6 L732.4 296.1 L733.4 298.3 L734.4 298.3 L735.3 296.0 L736.3 296.8 L737.3 296.8 L738.2 297.9 L739.2 296.3 L740.2 299.8 L741.2 300.9 L742.1 297.4 L743.1 294.1 L744.1 297.6 L745.1 296.3 L746.0 291.3 L747.0 289.6 L748.0 294.9 L749.0 297.1 L750.0 295.8 L750.9 297.4 L751.9 297.9 L752.9 297.7 L753.9 297.8 L754.8 296.6 L755.8 294.2 L756.8 295.6 L757.8 293.6 L758.7 295.3 L759.7 297.0 L760.7 279.9 L761.6 277.8 L762.6 289.5 L763.6 288.9 L764.6 287.7 L765.5 285.0 L766.5 287.9 L767.5 289.7 L768.5 287.2 L769.5 286.6 L770.4 286.5 L771.4 286.2 L772.4 290.2 L773.4 290.8 L774.3 290.2 L775.3 289.6 L776.3 291.1 L777.2 287.9 L778.2 284.2 L779.2 284.0 L780.2 284.8 L781.1 286.2 L782.1 283.6 L783.1 289.2 L784.1 288.7 L785.0 290.2 L786.0 291.0 L787.0 287.0 L788.0 284.0 L789.0 289.4 L789.9 287.6 L790.9 288.7 L791.9 287.0 L792.9 285.4 L793.8 292.9 L794.8 299.7 L795.8 298.9 L796.8 299.0 L797.7 298.4 L798.7 302.1 L799.7 297.0 L800.6 296.7 L801.6 298.6 L802.6 297.7 L803.6 303.2 L804.5 300.8 L805.5 300.4 L806.5 300.5 L807.5 299.8 L808.5 302.1 L809.4 296.5 L810.4 298.3 L811.4 295.9 L812.4 296.7 L813.3 301.6 L814.3 295.0 L815.3 297.0 L816.2 298.8 L817.2 299.5 L818.2 298.2 L819.2 301.5 L820.1 297.1 L821.1 296.8 L822.1 301.8 L823.1 303.0 L824.0 301.5 L825.0 297.4 L826.0 296.0 L827.0 295.5 L828.0 300.5 L828.9 299.7 L829.9 298.3 L830.9 300.0 L831.9 299.6 L832.8 301.8 L833.8 303.1 L834.8 300.3 L835.8 296.7 L836.7 300.8 L837.7 299.3 L838.7 297.1 L839.6 294.2 L840.6 297.5 L841.6 297.0 L842.6 300.9 L843.5 298.0 L844.5 300.9 L845.5 302.0 L846.5 302.7 L847.5 298.0 L848.4 299.8 L849.4 296.8 L850.4 297.8 L851.4 298.1 L852.3 300.0 L853.3 298.6 L854.3 297.9 L855.2 300.6 L856.2 300.2 L857.2 298.3 L858.2 302.0 L859.1 299.7 L860.1 297.9 L861.1 298.7 L862.1 296.3 L863.0 296.8 L864.0 297.9 L865.0 300.2 L866.0 302.3 L867.0 302.1 L867.9 301.8 L868.9 295.4 L869.9 298.2 L870.9 294.9 L871.8 293.6 L872.8 297.4 L873.8 302.1 L874.8 302.7 L875.7 301.1 L876.7 299.4 L877.7 298.6 L878.6 297.6 L879.6 295.4 L880.6 298.8 L881.6 301.0 L882.5 298.2 L883.5 294.6 L884.5 297.9 L885.5 297.1 L886.5 298.9 L887.4 299.9 L888.4 300.6 L889.4 301.4 L890.4 299.0 L891.3 298.6 L892.3 300.8 L893.3 298.6 L894.2 298.0 L895.2 299.1 L896.2 296.6 L897.2 301.0 L898.1 301.0 L899.1 297.2 L900.1 299.6 L901.1 301.3 L902.0 301.0 L903.0 300.4 L904.0 297.6 L905.0 291.1 L906.0 296.4 L906.9 299.0 L907.9 300.4 L908.9 297.6 L909.9 299.0 L910.8 299.4 L911.8 298.9 L912.8 299.1 L913.8 298.1 L914.7 300.3 L915.7 299.0 L916.7 294.1 L917.6 294.0 L918.6 298.0 L919.6 297.8 L920.6 296.2 L921.5 299.2 L922.5 297.3 L923.5 298.9 L924.5 302.3 L925.5 295.4 L926.4 296.1 L927.4 296.1 L928.4 296.2 L929.4 295.4 L930.3 295.2 L931.3 297.1 L932.3 300.1 L933.2 300.6 L934.2 300.6 L935.2 298.5 L936.2 301.8 L937.1 298.4 L938.1 300.3 L939.1 301.5 L940.1 295.9 L941.0 299.4 L942.0 297.8 L943.0 299.7 L944.0 300.8 L945.0 298.9 L945.9 299.7 L946.9 298.5 L947.9 293.5 L948.9 293.6 L949.8 298.8 L950.8 299.8 L951.8 300.7 L952.8 299.4 L953.7 296.0 L954.7 296.5 L955.7 298.2 L956.6 299.8 L957.6 298.1 L958.6 298.6 L959.6 294.1 L960.5 299.1 L961.5 296.1 L962.5 300.5 L963.5 301.5 L964.5 293.0 L965.4 287.8 L966.4 295.0 L967.4 294.9 L968.4 293.1 L969.3 296.3 L970.3 297.3 L971.3 290.1 L972.2 289.6 L973.2 289.2 L974.2 297.8 L975.2 294.6 L976.1 292.0 L977.1 295.3 L978.1 294.1 L979.1 291.7 L980.0 290.4 L981.0 287.9 L982.0 292.8 L983.0 293.0 L984.0 291.6 L984.9 286.9 L985.9 291.0 L986.9 291.7 L987.9 293.2 L988.8 284.2 L989.8 289.2 L990.8 292.0 L991.8 292.4 L992.7 290.6 L993.7 289.1 L994.7 295.1 L995.6 292.0 L996.6 288.4 L997.6 294.9 L998.6 289.4 L999.5 288.6 L1000.5 286.3 L1001.5 289.8 L1002.5 290.3 L1003.5 293.0 L1004.4 288.4 L1005.4 291.9 L1006.4 287.0 L1007.4 289.7 L1008.3 291.6 L1009.3 290.7 L1010.3 289.5 L1011.2 292.5 L1012.2 290.4 L1013.2 292.7 L1014.2 290.3 L1015.1 289.7 L1016.1 290.2 L1017.1 288.9 L1018.1 291.6 L1019.0 284.1 L1020.0 286.0 L1021.0 286.1 L1022.0 284.5 L1023.0 286.4 L1023.9 280.0 L1024.9 280.1 L1025.9 280.7 L1026.8 282.9 L1027.8 282.1 L1028.8 281.2 L1029.8 279.1 L1030.8 280.6 L1031.7 285.6 L1032.7 285.4 L1033.7 287.3 L1034.7 286.4 L1035.6 284.9 L1036.6 283.8 L1037.6 287.6 L1038.5 289.5 L1039.5 286.6 L1040.5 281.3 L1041.5 279.9 L1042.5 279.7 L1043.4 277.4 L1044.4 285.5 L1045.4 285.2 L1046.3 283.3 L1047.3 279.4 L1048.3 283.0 L1049.3 278.8 L1050.2 277.6 L1051.2 280.3 L1052.2 281.9 L1053.2 279.5 L1054.2 278.4 L1055.1 279.3 L1056.1 282.7 L1057.1 284.0 L1058.0 281.1 L1059.0 279.5 L1060.0 279.1 L1061.0 282.9 L1062.0 283.3 L1062.9 278.6 L1063.9 278.2 L1064.9 277.0 L1065.8 277.5 L1066.8 280.2 L1067.8 280.7 L1068.8 278.7 L1069.8 279.8 L1070.7 281.5 L1071.7 282.8 L1072.7 281.8 L1073.7 283.2 L1074.6 282.0 L1075.6 286.1 L1076.6 290.0 L1077.5 289.6 L1078.5 289.4 L1079.5 289.5 L1080.5 292.8 L1081.5 288.2 L1082.4 286.5 L1083.4 292.3 L1084.4 293.3 L1085.3 292.1 L1086.3 288.8 L1087.3 293.8 L1088.3 296.0 L1089.2 293.3 L1090.2 291.8 L1091.2 293.1 L1092.2 290.6 L1093.2 291.9 L1094.1 294.1 L1095.1 295.7 L1096.1 294.2 L1097.0 294.2 L1098.0 291.2 L1099.0 296.1" fill="none" stroke="#10c98b" stroke-width="2" stroke-linejoin="round"/>
<path d="M397.0 394.9 L398.0 394.9 L398.9 394.9 L399.9 394.9 L400.9 395.3 L401.9 395.2 L402.9 394.5 L403.8 391.5 L404.8 394.0 L405.8 395.3 L406.8 395.3 L407.7 394.7 L408.7 395.3 L409.7 395.3 L410.6 395.6 L411.6 395.4 L412.6 395.4 L413.6 394.9 L414.6 395.0 L415.5 395.6 L416.5 395.5 L417.5 395.4 L418.4 395.9 L419.4 395.3 L420.4 395.7 L421.4 395.1 L422.4 394.9 L423.3 394.7 L424.3 394.7 L425.3 395.2 L426.2 394.7 L427.2 391.9 L428.2 394.6 L429.2 394.9 L430.1 395.0 L431.1 394.8 L432.1 395.1 L433.1 395.4 L434.1 395.2 L435.0 395.7 L436.0 395.2 L437.0 395.1 L437.9 394.8 L438.9 394.5 L439.9 394.7 L440.9 395.6 L441.9 395.0 L442.8 395.2 L443.8 395.3 L444.8 394.9 L445.8 395.3 L446.7 395.6 L447.7 395.1 L448.7 395.8 L449.6 394.3 L450.6 390.9 L451.6 394.0 L452.6 395.8 L453.6 395.8 L454.5 395.3 L455.5 394.8 L456.5 395.6 L457.4 396.0 L458.4 395.2 L459.4 394.9 L460.4 395.7 L461.4 395.7 L462.3 395.8 L463.3 395.6 L464.3 395.5 L465.2 395.6 L466.2 395.8 L467.2 394.9 L468.2 395.3 L469.1 395.7 L470.1 395.2 L471.1 395.7 L472.1 395.7 L473.1 394.4 L474.0 390.4 L475.0 394.0 L476.0 395.5 L476.9 395.6 L477.9 395.7 L478.9 395.1 L479.9 394.7 L480.9 394.9 L481.8 395.2 L482.8 395.5 L483.8 395.2 L484.8 393.6 L485.7 394.4 L486.7 393.6 L487.7 393.5 L488.6 393.8 L489.6 394.9 L490.6 394.3 L491.6 391.8 L492.6 391.3 L493.5 393.6 L494.5 392.7 L495.5 392.9 L496.4 392.2 L497.4 389.1 L498.4 391.3 L499.4 392.1 L500.4 392.5 L501.3 391.7 L502.3 393.0 L503.3 394.6 L504.2 391.9 L505.2 393.1 L506.2 393.5 L507.2 392.0 L508.1 393.3 L509.1 392.4 L510.1 392.8 L511.1 393.1 L512.0 392.5 L513.0 392.8 L514.0 391.8 L515.0 391.4 L516.0 391.1 L516.9 392.6 L517.9 392.4 L518.9 391.2 L519.9 392.3 L520.8 388.7 L521.8 392.8 L522.8 393.7 L523.8 394.4 L524.7 394.5 L525.7 392.8 L526.7 391.3 L527.6 391.5 L528.6 394.2 L529.6 392.2 L530.6 392.1 L531.5 393.0 L532.5 392.8 L533.5 392.2 L534.5 392.5 L535.5 392.2 L536.4 391.6 L537.4 390.8 L538.4 392.1 L539.4 393.8 L540.3 393.8 L541.3 393.6 L542.3 392.4 L543.2 392.8 L544.2 388.2 L545.2 392.4 L546.2 394.1 L547.1 393.9 L548.1 391.4 L549.1 392.4 L550.1 393.6 L551.0 392.2 L552.0 393.4 L553.0 392.6 L554.0 391.4 L555.0 392.7 L555.9 393.9 L556.9 393.3 L557.9 393.6 L558.9 390.2 L559.8 390.9 L560.8 389.8 L561.8 392.2 L562.8 391.7 L563.7 391.1 L564.7 393.9 L565.7 392.4 L566.6 390.1 L567.6 387.3 L568.6 389.4 L569.6 390.9 L570.5 393.1 L571.5 392.9 L572.5 390.2 L573.5 390.1 L574.5 391.3 L575.4 392.9 L576.4 393.4 L577.4 390.9 L578.4 393.0 L579.3 391.0 L580.3 390.7 L581.3 392.3 L582.2 390.9 L583.2 393.3 L584.2 392.8 L585.2 392.3 L586.1 392.2 L587.1 391.5 L588.1 391.9 L589.1 390.4 L590.0 391.1 L591.0 385.8 L592.0 388.6 L593.0 392.3 L594.0 393.5 L594.9 390.1 L595.9 389.9 L596.9 390.4 L597.9 391.8 L598.8 391.2 L599.8 389.5 L600.8 389.9 L601.8 391.7 L602.7 390.3 L603.7 393.1 L604.7 389.3 L605.6 392.1 L606.6 389.6 L607.6 392.6 L608.6 390.0 L609.5 391.4 L610.5 392.2 L611.5 391.3 L612.5 391.6 L613.5 390.1 L614.4 385.6 L615.4 388.1 L616.4 390.9 L617.4 390.5 L618.3 391.6 L619.3 392.4 L620.3 391.4 L621.2 389.9 L622.2 391.3 L623.2 392.3 L624.2 389.7 L625.1 391.0 L626.1 391.7 L627.1 392.1 L628.1 389.8 L629.0 391.0 L630.0 389.8 L631.0 392.2 L632.0 390.5 L633.0 389.1 L633.9 391.1 L634.9 392.7 L635.9 390.3 L636.9 389.7 L637.8 385.2 L638.8 387.8 L639.8 391.0 L640.8 392.0 L641.7 392.6 L642.7 389.8 L643.7 391.6 L644.6 391.3 L645.6 392.2 L646.6 388.9 L647.6 390.3 L648.5 390.0 L649.5 390.7 L650.5 389.8 L651.5 392.2 L652.5 391.6 L653.4 391.6 L654.4 390.3 L655.4 391.5 L656.4 392.4 L657.3 392.2 L658.3 390.3 L659.3 389.0 L660.2 387.9 L661.2 385.3 L662.2 391.6 L663.2 389.2 L664.1 391.1 L665.1 390.8 L666.1 392.2 L667.1 390.6 L668.0 390.9 L669.0 389.4 L670.0 390.2 L671.0 390.1 L672.0 390.2 L672.9 392.0 L673.9 391.5 L674.9 391.4 L675.9 389.0 L676.8 391.4 L677.8 391.9 L678.8 392.5 L679.8 391.6 L680.7 389.8 L681.7 390.0 L682.7 388.9 L683.6 389.2 L684.6 385.1 L685.6 387.5 L686.6 390.7 L687.5 390.0 L688.5 389.7 L689.5 390.1 L690.5 391.0 L691.5 389.8 L692.4 388.7 L693.4 390.6 L694.4 391.7 L695.4 389.4 L696.3 391.0 L697.3 390.1 L698.3 389.9 L699.2 389.3 L700.2 391.3 L701.2 392.6 L702.2 390.3 L703.1 392.1 L704.1 390.3 L705.1 391.0 L706.1 389.3 L707.0 389.1 L708.0 385.1 L709.0 388.2 L710.0 389.6 L711.0 390.9 L711.9 389.9 L712.9 390.5 L713.9 389.5 L714.9 389.7 L715.8 391.0 L716.8 389.7 L717.8 389.3 L718.8 389.3 L719.7 389.3 L720.7 389.5 L721.7 390.6 L722.6 392.5 L723.6 391.2 L724.6 391.2 L725.6 390.1 L726.5 388.9 L727.5 389.9 L728.5 390.8 L729.5 391.0 L730.5 388.9 L731.4 383.6 L732.4 390.2 L733.4 390.7 L734.4 390.4 L735.3 390.5 L736.3 390.0 L737.3 390.7 L738.2 392.1 L739.2 391.2 L740.2 390.3 L741.2 389.6 L742.1 390.7 L743.1 388.0 L744.1 390.1 L745.1 390.7 L746.0 389.7 L747.0 388.8 L748.0 389.2 L749.0 389.4 L750.0 389.8 L750.9 388.8 L751.9 391.8 L752.9 389.0 L753.9 388.9 L754.8 385.9 L755.8 389.4 L756.8 390.5 L757.8 389.6 L758.7 391.4 L759.7 390.0 L760.7 391.4 L761.6 389.7 L762.6 392.0 L763.6 389.8 L764.6 390.8 L765.5 389.0 L766.5 388.5 L767.5 391.3 L768.5 390.0 L769.5 391.3 L770.4 391.8 L771.4 391.0 L772.4 390.0 L773.4 390.8 L774.3 389.4 L775.3 390.9 L776.3 391.8 L777.2 390.7 L778.2 386.5 L779.2 388.8 L780.2 391.0 L781.1 389.9 L782.1 388.6 L783.1 390.9 L784.1 390.4 L785.0 390.4 L786.0 390.9 L787.0 392.4 L788.0 389.1 L789.0 391.8 L789.9 391.8 L790.9 388.7 L791.9 388.9 L792.9 388.3 L793.8 390.5 L794.8 391.7 L795.8 390.0 L796.8 390.5 L797.7 391.1 L798.7 390.9 L799.7 388.4 L800.6 390.7 L801.6 385.6 L802.6 388.1 L803.6 391.1 L804.5 389.1 L805.5 389.4 L806.5 389.0 L807.5 391.6 L808.5 390.0 L809.4 389.5 L810.4 388.9 L811.4 390.0 L812.4 389.2 L813.3 391.7 L814.3 389.7 L815.3 391.9 L816.2 389.2 L817.2 389.9 L818.2 391.2 L819.2 390.0 L820.1 388.5 L821.1 389.5 L822.1 389.1 L823.1 390.3 L824.0 387.4 L825.0 386.7 L826.0 388.6 L827.0 389.1 L828.0 390.4 L828.9 390.7 L829.9 389.3 L830.9 392.0 L831.9 391.5 L832.8 390.0 L833.8 391.9 L834.8 391.6 L835.8 390.1 L836.7 390.6 L837.7 390.6 L838.7 390.4 L839.6 391.9 L840.6 391.8 L841.6 391.5 L842.6 390.3 L843.5 392.0 L844.5 390.9 L845.5 390.8 L846.5 390.4 L847.5 388.5 L848.4 385.7 L849.4 387.9 L850.4 388.8 L851.4 390.1 L852.3 389.0 L853.3 391.9 L854.3 391.5 L855.2 389.6 L856.2 390.9 L857.2 390.3 L858.2 391.7 L859.1 390.2 L860.1 389.5 L861.1 395.1 L862.1 393.3 L863.0 393.3 L864.0 392.9 L865.0 394.6 L866.0 395.7 L867.0 394.5 L867.9 394.7 L868.9 393.2 L869.9 396.3 L870.9 390.9 L871.8 389.6 L872.8 395.9 L873.8 396.9 L874.8 397.0 L875.7 395.4 L876.7 395.5 L877.7 396.5 L878.6 392.6 L879.6 392.4 L880.6 394.2 L881.6 394.1 L882.5 394.3 L883.5 395.3 L884.5 394.6 L885.5 384.0 L886.5 386.7 L887.4 387.1 L888.4 385.6 L889.4 385.0 L890.4 384.4 L891.3 385.2 L892.3 384.9 L893.3 385.3 L894.2 383.6 L895.2 382.3 L896.2 383.2 L897.2 385.8 L898.1 384.2 L899.1 384.1 L900.1 382.1 L901.1 385.5 L902.0 387.1 L903.0 386.5 L904.0 385.3 L905.0 385.7 L906.0 382.8 L906.9 386.8 L907.9 387.5 L908.9 384.1 L909.9 384.1 L910.8 385.3 L911.8 382.0 L912.8 386.1 L913.8 383.3 L914.7 388.1 L915.7 384.2 L916.7 382.8 L917.6 382.3 L918.6 380.6 L919.6 381.0 L920.6 384.3 L921.5 384.3 L922.5 387.3 L923.5 386.7 L924.5 386.4 L925.5 384.6 L926.4 386.3 L927.4 385.4 L928.4 386.7 L929.4 385.1 L930.3 384.9 L931.3 384.9 L932.3 384.5 L933.2 387.6 L934.2 383.5 L935.2 386.6 L936.2 387.3 L937.1 385.5 L938.1 386.3 L939.1 386.8 L940.1 383.3 L941.0 383.6 L942.0 380.2 L943.0 386.1 L944.0 385.7 L945.0 387.4 L945.9 384.3 L946.9 384.9 L947.9 384.7 L948.9 384.3 L949.8 386.8 L950.8 384.8 L951.8 384.6 L952.8 386.8 L953.7 384.8 L954.7 384.3 L955.7 385.1 L956.6 382.2 L957.6 382.7 L958.6 384.6 L959.6 383.8 L960.5 383.9 L961.5 385.0 L962.5 385.8 L963.5 386.8 L964.5 381.2 L965.4 375.6 L966.4 383.8 L967.4 387.7 L968.4 384.9 L969.3 385.6 L970.3 386.0 L971.3 383.5 L972.2 387.6 L973.2 381.2 L974.2 386.6 L975.2 382.4 L976.1 385.8 L977.1 382.7 L978.1 383.8 L979.1 383.4 L980.0 380.3 L981.0 379.7 L982.0 381.9 L983.0 379.1 L984.0 381.6 L984.9 383.9 L985.9 381.4 L986.9 383.3 L987.9 383.4 L988.8 374.3 L989.8 382.4 L990.8 384.2 L991.8 379.9 L992.7 380.2 L993.7 382.2 L994.7 384.3 L995.6 382.7 L996.6 380.4 L997.6 382.8 L998.6 384.2 L999.5 383.6 L1000.5 382.6 L1001.5 384.2 L1002.5 380.7 L1003.5 380.5 L1004.4 380.9 L1005.4 381.4 L1006.4 379.6 L1007.4 382.7 L1008.3 381.1 L1009.3 384.6 L1010.3 381.0 L1011.2 381.4 L1012.2 376.9 L1013.2 380.0 L1014.2 383.2 L1015.1 381.9 L1016.1 380.4 L1017.1 379.5 L1018.1 381.3 L1019.0 385.2 L1020.0 383.9 L1021.0 381.2 L1022.0 382.7 L1023.0 381.5 L1023.9 379.6 L1024.9 381.5 L1025.9 380.8 L1026.8 380.0 L1027.8 383.2 L1028.8 385.7 L1029.8 380.8 L1030.8 380.0 L1031.7 380.2 L1032.7 380.5 L1033.7 381.4 L1034.7 380.6 L1035.6 376.9 L1036.6 382.5 L1037.6 381.4 L1038.5 385.5 L1039.5 383.9 L1040.5 386.6 L1041.5 383.1 L1042.5 381.7 L1043.4 380.9 L1044.4 385.7 L1045.4 384.7 L1046.3 383.9 L1047.3 381.6 L1048.3 384.1 L1049.3 381.6 L1050.2 384.7 L1051.2 382.5 L1052.2 385.1 L1053.2 382.7 L1054.2 379.2 L1055.1 380.8 L1056.1 379.9 L1057.1 383.2 L1058.0 380.3 L1059.0 377.8 L1060.0 379.7 L1061.0 382.0 L1062.0 379.1 L1062.9 380.7 L1063.9 382.6 L1064.9 383.5 L1065.8 384.6 L1066.8 381.9 L1067.8 379.3 L1068.8 382.5 L1069.8 382.0 L1070.7 385.6 L1071.7 385.3 L1072.7 383.8 L1073.7 384.3 L1074.6 380.4 L1075.6 383.9 L1076.6 383.4 L1077.5 383.2 L1078.5 383.1 L1079.5 382.3 L1080.5 382.4 L1081.5 381.4 L1082.4 374.9 L1083.4 380.2 L1084.4 382.1 L1085.3 384.5 L1086.3 383.6 L1087.3 382.7 L1088.3 384.3 L1089.2 382.9 L1090.2 381.5 L1091.2 382.9 L1092.2 381.8 L1093.2 381.9 L1094.1 386.2 L1095.1 383.2 L1096.1 382.0 L1097.0 380.1 L1098.0 384.3 L1099.0 385.7" fill="none" stroke="#5c149a" stroke-width="2" stroke-linejoin="round"/>
<path d="M397.0 486.9 L398.0 486.6 L398.9 486.6 L399.9 486.9 L400.9 486.9 L401.9 486.8 L402.9 486.2 L403.8 483.0 L404.8 485.9 L405.8 487.2 L406.8 487.1 L407.7 486.7 L408.7 487.1 L409.7 487.1 L410.6 487.2 L411.6 487.1 L412.6 487.2 L413.6 486.7 L414.6 486.7 L415.5 487.1 L416.5 487.3 L417.5 487.1 L418.4 487.3 L419.4 487.2 L420.4 487.1 L421.4 486.8 L422.4 486.6 L423.3 486.7 L424.3 486.7 L425.3 487.3 L426.2 486.3 L427.2 483.7 L428.2 486.1 L429.2 486.7 L430.1 486.8 L431.1 486.8 L432.1 486.9 L433.1 487.1 L434.1 487.2 L435.0 487.2 L436.0 486.9 L437.0 487.1 L437.9 486.8 L438.9 486.6 L439.9 486.6 L440.9 487.3 L441.9 486.8 L442.8 486.7 L443.8 486.9 L444.8 486.7 L445.8 487.2 L446.7 487.4 L447.7 487.1 L448.7 487.4 L449.6 486.1 L450.6 482.6 L451.6 485.9 L452.6 487.4 L453.6 487.3 L454.5 487.0 L455.5 486.6 L456.5 487.1 L457.4 487.4 L458.4 486.9 L459.4 486.8 L460.4 487.3 L461.4 487.2 L462.3 487.1 L463.3 487.2 L464.3 487.3 L465.2 487.4 L466.2 487.4 L467.2 486.7 L468.2 487.2 L469.1 487.4 L470.1 487.1 L471.1 487.4 L472.1 487.4 L473.1 486.3 L474.0 482.3 L475.0 485.8 L476.0 487.3 L476.9 487.1 L477.9 487.3 L478.9 487.1 L479.9 486.8 L480.9 486.7 L481.8 487.0 L482.8 487.0 L483.8 487.1 L484.8 485.3 L485.7 485.3 L486.7 484.9 L487.7 485.1 L488.6 484.6 L489.6 485.5 L490.6 484.8 L491.6 483.8 L492.6 483.5 L493.5 484.9 L494.5 483.8 L495.5 483.7 L496.4 482.7 L497.4 479.5 L498.4 482.7 L499.4 484.1 L500.4 485.1 L501.3 484.5 L502.3 484.9 L503.3 485.8 L504.2 483.8 L505.2 485.2 L506.2 484.5 L507.2 484.0 L508.1 484.7 L509.1 483.5 L510.1 483.5 L511.1 485.2 L512.0 483.6 L513.0 484.1 L514.0 484.0 L515.0 483.9 L516.0 483.5 L516.9 484.0 L517.9 484.5 L518.9 483.4 L519.9 483.9 L520.8 479.6 L521.8 484.3 L522.8 485.5 L523.8 485.1 L524.7 485.5 L525.7 484.5 L526.7 483.7 L527.6 483.9 L528.6 485.4 L529.6 484.2 L530.6 484.5 L531.5 484.0 L532.5 484.7 L533.5 484.1 L534.5 484.3 L535.5 483.8 L536.4 484.0 L537.4 483.4 L538.4 483.8 L539.4 485.1 L540.3 485.6 L541.3 485.9 L542.3 485.1 L543.2 484.5 L544.2 480.4 L545.2 483.6 L546.2 485.4 L547.1 485.1 L548.1 483.5 L549.1 483.5 L550.1 484.8 L551.0 484.6 L552.0 485.2 L553.0 485.0 L554.0 484.0 L555.0 485.1 L555.9 485.8 L556.9 484.7 L557.9 484.9 L558.9 485.1 L559.8 485.4 L560.8 484.7 L561.8 486.5 L562.8 486.2 L563.7 485.0 L564.7 487.4 L565.7 486.1 L566.6 484.8 L567.6 482.4 L568.6 484.1 L569.6 484.9 L570.5 487.1 L571.5 487.4 L572.5 484.7 L573.5 485.4 L574.5 485.5 L575.4 486.8 L576.4 487.4 L577.4 485.6 L578.4 487.5 L579.3 486.0 L580.3 484.9 L581.3 487.3 L582.2 486.3 L583.2 487.5 L584.2 486.6 L585.2 486.3 L586.1 486.8 L587.1 486.6 L588.1 487.4 L589.1 485.8 L590.0 486.4 L591.0 480.6 L592.0 484.0 L593.0 487.2 L594.0 487.4 L594.9 485.2 L595.9 485.5 L596.9 485.3 L597.9 486.8 L598.8 486.2 L599.8 484.8 L600.8 484.8 L601.8 487.1 L602.7 485.4 L603.7 487.4 L604.7 484.8 L605.6 487.2 L606.6 484.7 L607.6 486.9 L608.6 485.4 L609.5 486.1 L610.5 486.8 L611.5 486.0 L612.5 486.9 L613.5 485.5 L614.4 480.4 L615.4 483.8 L616.4 486.2 L617.4 486.4 L618.3 486.0 L619.3 487.2 L620.3 485.5 L621.2 485.5 L622.2 486.6 L623.2 486.6 L624.2 484.8 L625.1 486.5 L626.1 486.9 L627.1 487.5 L628.1 485.4 L629.0 485.4 L630.0 485.1 L631.0 486.5 L632.0 485.8 L633.0 485.0 L633.9 485.7 L634.9 486.8 L635.9 485.7 L636.9 485.7 L637.8 480.8 L638.8 484.0 L639.8 485.6 L640.8 487.4 L641.7 487.2 L642.7 484.9 L643.7 487.2 L644.6 487.4 L645.6 487.2 L646.6 484.8 L647.6 485.2 L648.5 485.5 L649.5 486.4 L650.5 485.6 L651.5 486.8 L652.5 487.5 L653.4 486.2 L654.4 485.8 L655.4 486.0 L656.4 487.0 L657.3 487.0 L658.3 485.6 L659.3 484.8 L660.2 484.1 L661.2 481.2 L662.2 486.2 L663.2 485.0 L664.1 486.6 L665.1 485.9 L666.1 486.8 L667.1 485.0 L668.0 486.2 L669.0 485.2 L670.0 485.0 L671.0 485.5 L672.0 486.1 L672.9 486.6 L673.9 486.1 L674.9 487.3 L675.9 485.1 L676.8 486.2 L677.8 487.2 L678.8 487.0 L679.8 486.5 L680.7 485.7 L681.7 485.3 L682.7 485.1 L683.6 485.4 L684.6 480.3 L685.6 483.6 L686.6 486.1 L687.5 485.1 L688.5 485.3 L689.5 485.5 L690.5 485.8 L691.5 485.7 L692.4 485.2 L693.4 485.8 L694.4 487.2 L695.4 484.8 L696.3 487.2 L697.3 485.8 L698.3 485.4 L699.2 484.9 L700.2 487.4 L701.2 487.5 L702.2 484.9 L703.1 487.2 L704.1 485.2 L705.1 485.7 L706.1 485.1 L707.0 485.0 L708.0 480.3 L709.0 483.5 L710.0 484.6 L711.0 486.2 L711.9 485.5 L712.9 485.8 L713.9 485.9 L714.9 486.0 L715.8 486.9 L716.8 486.1 L717.8 485.9 L718.8 486.1 L719.7 484.8 L720.7 486.0 L721.7 485.7 L722.6 487.1 L723.6 487.1 L724.6 486.2 L725.6 485.1 L726.5 484.7 L727.5 484.9 L728.5 486.9 L729.5 487.4 L730.5 485.2 L731.4 480.2 L732.4 485.4 L733.4 487.0 L734.4 486.6 L735.3 486.3 L736.3 484.9 L737.3 485.7 L738.2 487.5 L739.2 487.0 L740.2 486.9 L741.2 485.4 L742.1 486.3 L743.1 484.6 L744.1 486.3 L745.1 487.3 L746.0 486.7 L747.0 485.7 L748.0 485.2 L749.0 485.1 L750.0 484.9 L750.9 484.9 L751.9 487.1 L752.9 485.5 L753.9 485.1 L754.8 480.9 L755.8 484.2 L756.8 486.1 L757.8 484.8 L758.7 486.1 L759.7 485.2 L760.7 486.4 L761.6 485.6 L762.6 487.2 L763.6 484.7 L764.6 485.9 L765.5 485.3 L766.5 484.6 L767.5 486.5 L768.5 485.4 L769.5 486.9 L770.4 486.6 L771.4 487.3 L772.4 485.4 L773.4 486.8 L774.3 485.7 L775.3 486.4 L776.3 487.5 L777.2 485.7 L778.2 481.8 L779.2 484.2 L780.2 487.3 L781.1 485.0 L782.1 484.9 L783.1 486.6 L784.1 486.9 L785.0 485.8 L786.0 487.2 L787.0 487.5 L788.0 485.4 L789.0 487.1 L789.9 487.2 L790.9 485.0 L791.9 485.1 L792.9 484.6 L793.8 486.6 L794.8 487.5 L795.8 486.6 L796.8 486.0 L797.7 486.7 L798.7 487.2 L799.7 485.2 L800.6 485.6 L801.6 480.9 L802.6 483.5 L803.6 486.9 L804.5 485.1 L805.5 485.7 L806.5 484.2 L807.5 486.7 L808.5 485.5 L809.4 484.2 L810.4 484.5 L811.4 485.7 L812.4 484.8 L813.3 486.7 L814.3 485.3 L815.3 487.1 L816.2 484.7 L817.2 486.0 L818.2 487.3 L819.2 485.2 L820.1 484.4 L821.1 485.0 L822.1 485.1 L823.1 486.6 L824.0 483.3 L825.0 481.8 L826.0 483.6 L827.0 484.6 L828.0 485.3 L828.9 485.8 L829.9 484.4 L830.9 486.6 L831.9 486.2 L832.8 484.8 L833.8 486.7 L834.8 486.6 L835.8 485.2 L836.7 485.4 L837.7 486.3 L838.7 485.7 L839.6 486.5 L840.6 486.5 L841.6 485.8 L842.6 486.0 L843.5 487.5 L844.5 486.3 L845.5 485.9 L846.5 485.9 L847.5 483.6 L848.4 481.7 L849.4 484.2 L850.4 485.4 L851.4 485.5 L852.3 484.9 L853.3 487.4 L854.3 487.1 L855.2 484.5 L856.2 486.2 L857.2 484.8 L858.2 486.2 L859.1 485.7 L860.1 484.4 L861.1 487.0 L862.1 485.0 L863.0 483.8 L864.0 484.6 L865.0 485.4 L866.0 485.2 L867.0 484.1 L867.9 486.7 L868.9 486.4 L869.9 487.5 L870.9 483.4 L871.8 481.7 L872.8 486.3 L873.8 487.4 L874.8 486.6 L875.7 487.2 L876.7 486.1 L877.7 487.3 L878.6 484.9 L879.6 484.0 L880.6 485.6 L881.6 487.2 L882.5 485.8 L883.5 487.1 L884.5 487.5 L885.5 486.5 L886.5 486.6 L887.4 487.5 L888.4 487.5 L889.4 486.4 L890.4 485.4 L891.3 486.8 L892.3 485.6 L893.3 485.0 L894.2 484.6 L895.2 482.6 L896.2 484.2 L897.2 486.1 L898.1 484.1 L899.1 485.8 L900.1 483.9 L901.1 486.0 L902.0 487.4 L903.0 486.4 L904.0 486.6 L905.0 485.7 L906.0 484.6 L906.9 487.3 L907.9 487.2 L908.9 485.0 L909.9 485.0 L910.8 487.4 L911.8 484.2 L912.8 485.9 L913.8 484.0 L914.7 487.3 L915.7 485.6 L916.7 484.7 L917.6 482.7 L918.6 482.4 L919.6 483.4 L920.6 484.7 L921.5 484.0 L922.5 487.0 L923.5 486.4 L924.5 487.5 L925.5 486.8 L926.4 486.5 L927.4 485.1 L928.4 487.1 L929.4 485.4 L930.3 486.4 L931.3 485.3 L932.3 485.4 L933.2 487.5 L934.2 485.2 L935.2 486.5 L936.2 486.3 L937.1 486.2 L938.1 487.3 L939.1 486.3 L940.1 485.0 L941.0 484.3 L942.0 482.2 L943.0 486.0 L944.0 485.1 L945.0 486.4 L945.9 484.3 L946.9 484.5 L947.9 484.7 L948.9 485.6 L949.8 486.7 L950.8 484.2 L951.8 484.4 L952.8 486.9 L953.7 485.9 L954.7 484.1 L955.7 485.4 L956.6 483.7 L957.6 484.4 L958.6 486.1 L959.6 484.3 L960.5 482.6 L961.5 484.4 L962.5 485.8 L963.5 485.8 L964.5 482.2 L965.4 477.1 L966.4 483.1 L967.4 486.3 L968.4 484.7 L969.3 486.2 L970.3 484.7 L971.3 483.2 L972.2 486.0 L973.2 481.3 L974.2 485.3 L975.2 481.0 L976.1 483.8 L977.1 481.2 L978.1 483.8 L979.1 484.4 L980.0 481.6 L981.0 480.7 L982.0 483.4 L983.0 480.8 L984.0 480.6 L984.9 484.5 L985.9 480.1 L986.9 482.8 L987.9 483.1 L988.8 474.9 L989.8 482.2 L990.8 484.6 L991.8 480.5 L992.7 481.1 L993.7 481.1 L994.7 485.1 L995.6 483.6 L996.6 481.1 L997.6 481.4 L998.6 484.8 L999.5 484.9 L1000.5 481.3 L1001.5 484.0 L1002.5 479.5 L1003.5 480.1 L1004.4 480.4 L1005.4 480.2 L1006.4 480.3 L1007.4 482.7 L1008.3 480.6 L1009.3 484.0 L1010.3 479.9 L1011.2 482.2 L1012.2 475.9 L1013.2 481.0 L1014.2 482.1 L1015.1 480.4 L1016.1 480.1 L1017.1 479.1 L1018.1 482.1 L1019.0 484.2 L1020.0 483.8 L1021.0 479.8 L1022.0 482.0 L1023.0 482.5 L1023.9 480.7 L1024.9 480.6 L1025.9 479.7 L1026.8 479.1 L1027.8 482.1 L1028.8 484.5 L1029.8 480.3 L1030.8 480.8 L1031.7 480.0 L1032.7 480.0 L1033.7 480.1 L1034.7 480.2 L1035.6 476.9 L1036.6 482.8 L1037.6 481.5 L1038.5 484.0 L1039.5 484.6 L1040.5 485.3 L1041.5 482.1 L1042.5 482.5 L1043.4 482.3 L1044.4 485.1 L1045.4 483.4 L1046.3 484.7 L1047.3 481.1 L1048.3 482.4 L1049.3 480.8 L1050.2 484.9 L1051.2 483.4 L1052.2 485.2 L1053.2 482.4 L1054.2 480.1 L1055.1 481.5 L1056.1 479.7 L1057.1 482.7 L1058.0 479.3 L1059.0 476.9 L1060.0 480.0 L1061.0 482.3 L1062.0 479.4 L1062.9 480.4 L1063.9 480.8 L1064.9 483.8 L1065.8 484.7 L1066.8 481.9 L1067.8 479.9 L1068.8 483.5 L1069.8 481.5 L1070.7 484.3 L1071.7 483.9 L1072.7 482.3 L1073.7 484.8 L1074.6 479.6 L1075.6 482.0 L1076.6 481.8 L1077.5 482.9 L1078.5 482.1 L1079.5 481.6 L1080.5 481.2 L1081.5 481.0 L1082.4 475.6 L1083.4 481.5 L1084.4 481.3 L1085.3 485.0 L1086.3 485.0 L1087.3 483.0 L1088.3 484.0 L1089.2 482.6 L1090.2 481.7 L1091.2 481.3 L1092.2 482.4 L1093.2 481.7 L1094.1 484.5 L1095.1 482.2 L1096.1 481.3 L1097.0 480.2 L1098.0 484.0 L1099.0 484.8" fill="none" stroke="#2f6cc0" stroke-width="2" stroke-linejoin="round"/>
<text x="383.5" y="492.8" text-anchor="end" font-size="12" fill="#444">0</text>
<text x="383.5" y="437.3" text-anchor="end" font-size="12" fill="#444">250</text>
<text x="383.5" y="381.8" text-anchor="end" font-size="12" fill="#444">500</text>
<text x="383.5" y="326.3" text-anchor="end" font-size="12" fill="#444">750</text>
<text x="383.5" y="270.8" text-anchor="end" font-size="12" fill="#444">1,000</text>
<text transform="translate(310 376.4) rotate(-90)" text-anchor="middle" font-size="13" font-style="italic" fill="#222">Maximum Number of Instances</text>
<text transform="translate(399.3 501.6) rotate(-30)" text-anchor="end" font-size="12" letter-spacing="0.2" fill="#222">2014-04-04 00:00</text>
<text transform="translate(428.6 501.6) rotate(-30)" text-anchor="end" font-size="12" letter-spacing="0.2" fill="#222">2014-04-05 06:00</text>
<text transform="translate(457.8 501.6) rotate(-30)" text-anchor="end" font-size="12" letter-spacing="0.2" fill="#222">2014-04-06 12:00</text>
<text transform="translate(487.1 501.6) rotate(-30)" text-anchor="end" font-size="12" letter-spacing="0.2" fill="#222">2014-04-07 18:00</text>
<text transform="translate(516.3 501.6) rotate(-30)" text-anchor="end" font-size="12" letter-spacing="0.2" fill="#222">2014-04-09 00:00</text>
<text transform="translate(545.5 501.6) rotate(-30)" text-anchor="end" font-size="12" letter-spacing="0.2" fill="#222">2014-04-10 06:00</text>
<text transform="translate(574.8 501.6) rotate(-30)" text-anchor="end" font-size="12" letter-spacing="0.2" fill="#222">2014-04-11 12:00</text>
<text transform="translate(604.0 501.6) rotate(-30)" text-anchor="end" font-size="12" letter-spacing="0.2" fill="#222">2014-04-12 18:00</text>
<text transform="translate(633.3 501.6) rotate(-30)" text-anchor="end" font-size="12" letter-spacing="0.2" fill="#222">2014-04-14 00:00</text>
<text transform="translate(662.5 501.6) rotate(-30)" text-anchor="end" font-size="12" letter-spacing="0.2" fill="#222">2014-04-15 06:00</text>
<text transform="translate(691.8 501.6) rotate(-30)" text-anchor="end" font-size="12" letter-spacing="0.2" fill="#222">2014-04-16 12:00</text>
<text transform="translate(721.0 501.6) rotate(-30)" text-anchor="end" font-size="12" letter-spacing="0.2" fill="#222">2014-04-17 18:00</text>
<text transform="translate(750.3 501.6) rotate(-30)" text-anchor="end" font-size="12" letter-spacing="0.2" fill="#222">2014-04-19 00:00</text>
<text transform="translate(779.5 501.6) rotate(-30)" text-anchor="end" font-size="12" letter-spacing="0.2" fill="#222">2014-04-20 06:00</text>
<text transform="translate(808.8 501.6) rotate(-30)" text-anchor="end" font-size="12" letter-spacing="0.2" fill="#222">2014-04-21 12:00</text>
<text transform="translate(838.0 501.6) rotate(-30)" text-anchor="end" font-size="12" letter-spacing="0.2" fill="#222">2014-04-22 18:00</text>
<text transform="translate(867.3 501.6) rotate(-30)" text-anchor="end" font-size="12" letter-spacing="0.2" fill="#222">2014-04-24 00:00</text>
<text transform="translate(896.5 501.6) rotate(-30)" text-anchor="end" font-size="12" letter-spacing="0.2" fill="#222">2014-04-25 06:00</text>
<text transform="translate(925.8 501.6) rotate(-30)" text-anchor="end" font-size="12" letter-spacing="0.2" fill="#222">2014-04-26 12:00</text>
<text transform="translate(955.0 501.6) rotate(-30)" text-anchor="end" font-size="12" letter-spacing="0.2" fill="#222">2014-04-27 18:00</text>
<text transform="translate(984.3 501.6) rotate(-30)" text-anchor="end" font-size="12" letter-spacing="0.2" fill="#222">2014-04-29 00:00</text>
<text transform="translate(1013.5 501.6) rotate(-30)" text-anchor="end" font-size="12" letter-spacing="0.2" fill="#222">2014-04-30 06:00</text>
<text transform="translate(1042.8 501.6) rotate(-30)" text-anchor="end" font-size="12" letter-spacing="0.2" fill="#222">2014-05-01 12:00</text>
<text transform="translate(1072.0 501.6) rotate(-30)" text-anchor="end" font-size="12" letter-spacing="0.2" fill="#222">2014-05-02 18:00</text>
<rect x="1112" y="266.1" width="13" height="12.7" fill="#10c98b"/>
<rect x="1112" y="287.0" width="13" height="12.7" fill="#5c149a"/>
<rect x="1112" y="307.8" width="13" height="12.7" fill="#2f6cc0"/>
<path d="M721.5 220 H834.5 V265 H790.5 L763 279 L778 265 H721.5 Z" fill="#999" opacity="0.25" transform="translate(1 1.2)"/>
<path d="M720.7 219.5 H835.6 V264.9 H790.5 L763 279 L778 264.9 H720.7 Z" fill="#fff" stroke="#cccccc" stroke-width="1"/>
<circle cx="761.4" cy="280.6" r="3.6" fill="#10c98b"/>
</svg>
<div class="t" style="left:1128.55px;top:263px;font-size:14px;line-height:18px;color:#303030;letter-spacing:0.323px;transform:scaleX(1.0357);transform-origin:0 0;">OS/Nova</div>
<div class="t" style="left:1129.20px;top:285px;font-size:14px;line-height:18px;color:#303030;letter-spacing:0.007px;transform:scaleX(1.0007);transform-origin:0 0;">AWS/EC2</div>
<div class="t" style="left:1128.47px;top:305px;font-size:14px;line-height:18px;color:#303030;letter-spacing:0.462px;transform:scaleX(1.0562);transform-origin:0 0;">Google/GCE</div>
<div class="t" style="left:728.21px;top:224px;font-size:14px;line-height:18px;color:#000;letter-spacing:0.000px;transform:scaleX(0.8956);transform-origin:0 0;font-weight:bold;">2014-04-19 13:00</div>
<div class="t" style="left:727.45px;top:241px;font-size:14px;line-height:18px;color:#222;letter-spacing:0.179px;transform:scaleX(1.0237);transform-origin:0 0;">Nova: 487</div>
</body></html>
